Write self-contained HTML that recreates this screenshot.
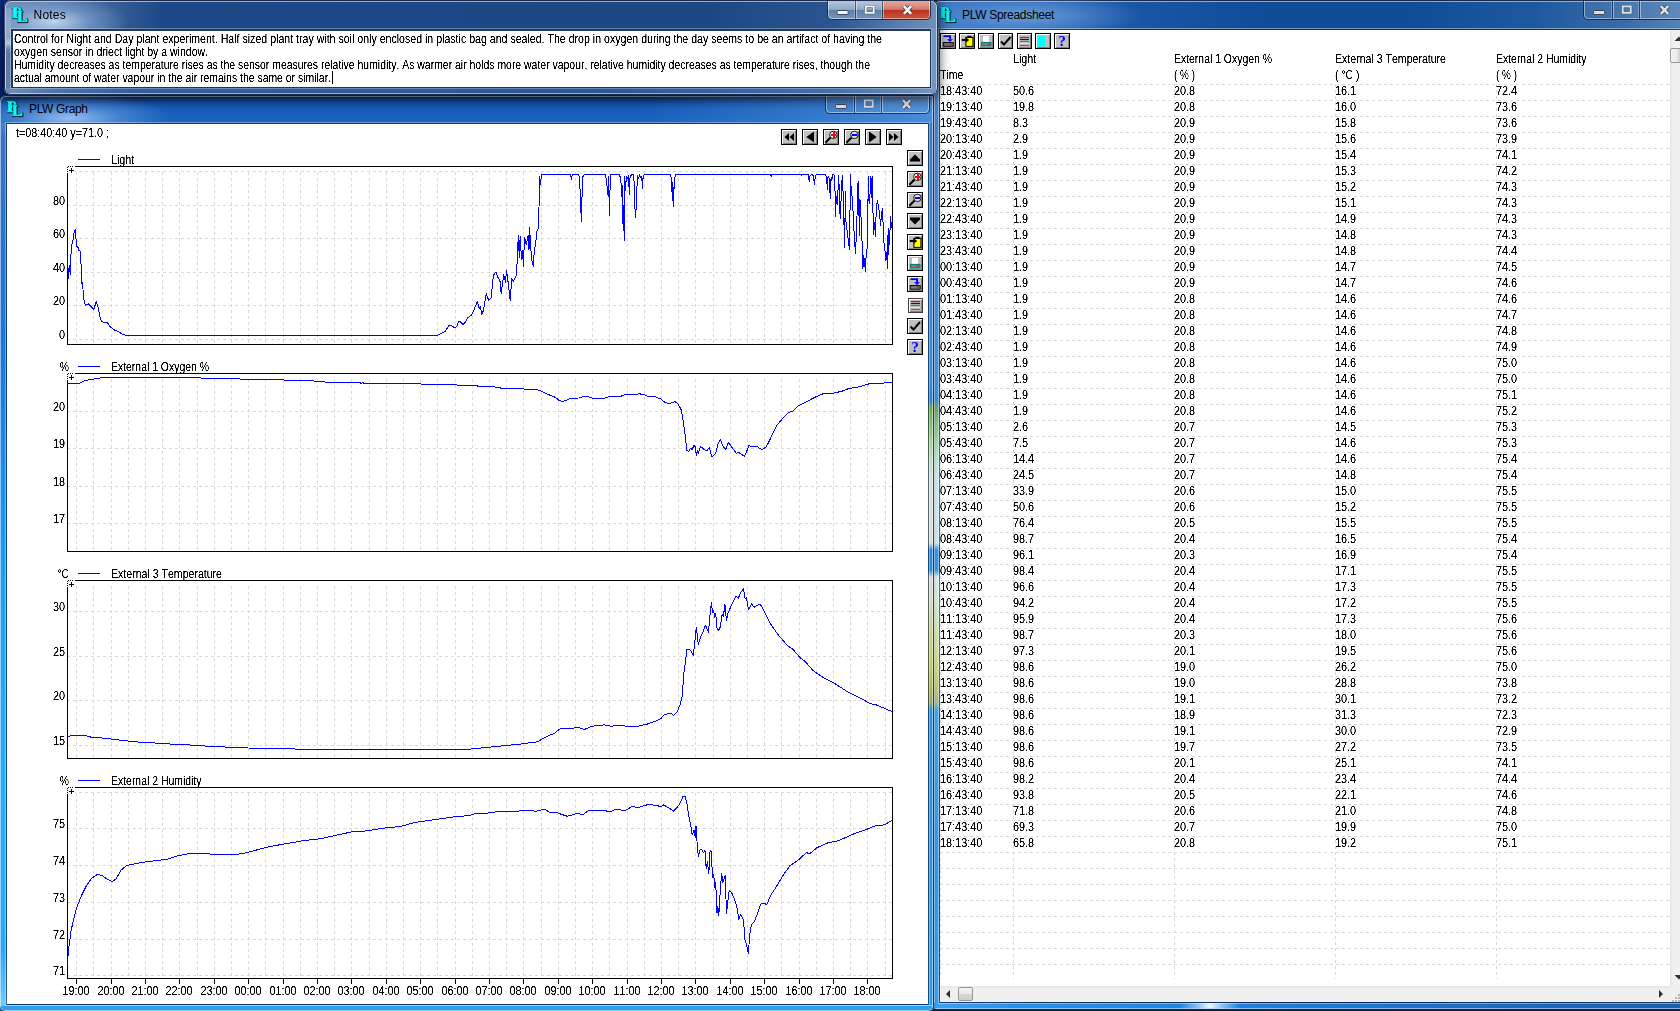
<!DOCTYPE html>
<html><head><meta charset="utf-8"><title>PicoLog</title>
<style>
html,body{margin:0;padding:0}
body{width:1680px;height:1011px;overflow:hidden;position:relative;background:#0a1a3c;font-family:"Liberation Sans",sans-serif;font-size:11px;color:#000}
.abs{position:absolute}
.t{position:absolute;white-space:pre;line-height:14px;height:14px;font-size:12px;transform-origin:0 0;font-kerning:none;font-variant-ligatures:none}
.ttl{position:absolute;white-space:pre;font-size:12px;line-height:14px;color:#000}
.win{position:absolute;box-sizing:border-box;overflow:hidden}
.btn{position:absolute;width:16px;height:16px;box-sizing:border-box;border:1px solid #000;background:#c0c0c0;box-shadow:inset 1px 1px 0 #fff,inset -1px -1px 0 #808080}
.btn svg{position:absolute;left:0;top:0}
svg{display:block}
.tx{position:absolute;left:0;top:0;width:100%;height:100%;filter:url(#crisp)}
</style></head><body>
<svg width="0" height="0" style="position:absolute"><filter id="crisp" x="0" y="0" width="100%" height="100%" color-interpolation-filters="sRGB"><feComponentTransfer><feFuncA type="linear" slope="3" intercept="-0.8"/></feComponentTransfer></filter></svg>

<div class="abs" style="left:0;top:0;width:12px;height:100px;background:linear-gradient(#0b2f8f,#0a2277)"></div>
<div class="win" id="sheet" style="left:933px;top:0;width:767px;height:1010px;border-radius:7px 7px 0 6px;background:linear-gradient(to right,#3a78c4 0px,#2a66b4 120px,#1a56a6 200px,#114c99 330px,#114c99 480px,#1d589f 600px,#3a6ba7 690px,#5282b6 747px);box-shadow:inset 0 0 0 1px rgba(8,20,50,.85),inset 0 0 0 2px rgba(255,255,255,.5)">
<div class="abs" style="left:1px;top:30px;width:7px;height:975px;background:linear-gradient(#4a86c8 94px,#4a94e0 350px,#3a90e0 370px,#70a878 378px,#8cc498 395px,#a0d8b0 410px,#c0e8d8 430px,#d0ecf8 450px,#d0ecf8 513px,#3a98e8 520px,#3a98e8 540px,#d8f0f8 547px,#d8f0e0 570px,#d0ecc8 590px,#d0e098 630px,#c0c880 660px,#a0c0a0 673px,#48a8f0 680px,#3a9ae8 830px,#3aa2f4 974px);box-shadow:inset 1px 0 0 rgba(255,255,255,.45)"></div>
<div class="abs" style="left:1px;top:1003px;width:800px;height:6px;background:linear-gradient(to right,#3aa2f4 0,#2492ee 80px,#1f84e4 250px,#1c78d6 400px,#1a68c0 600px,#1a5fb0 747px)"></div>
<div class="abs" style="left:247px;top:1003px;width:60px;height:6px;background:linear-gradient(to right,rgba(225,248,255,0),rgba(225,248,255,.55) 30%,rgba(235,252,255,.98) 50%,rgba(225,248,255,.55) 70%,rgba(225,248,255,0))"></div>
<div class="abs" style="left:1px;top:1008px;width:800px;height:1px;background:rgba(190,215,245,.7)"></div>
<div class="abs" style="left:0px;top:1009px;width:800px;height:1px;background:#12284e"></div>
<div class="abs" style="left:-20px;top:-6px;width:230px;height:44px;background:radial-gradient(closest-side,rgba(150,195,245,.55),rgba(125,172,236,.3) 55%,rgba(100,150,220,0) 100%)"></div>
<svg class="abs" style="left:6.2999999999999545px;top:6.2px" width="18" height="18" viewBox="0 0 19 19"><g fill-rule="evenodd"><path d="M1 1 H7.6 Q11 1 11 4.3 Q11 7.6 7.6 7.6 H6.3 V11.4 H7.4 V12.8 H1 V11.4 H2.1 V2.4 H1 Z M6.3 2.6 H7 Q8.1 2.6 8.1 4.3 Q8.1 6.1 7 6.1 H6.3 Z" transform="translate(0.6,0.6)" fill="#001818" stroke="#001818" stroke-width="0.9"/><path d="M1 1 H7.6 Q11 1 11 4.3 Q11 7.6 7.6 7.6 H6.3 V11.4 H7.4 V12.8 H1 V11.4 H2.1 V2.4 H1 Z M6.3 2.6 H7 Q8.1 2.6 8.1 4.3 Q8.1 6.1 7 6.1 H6.3 Z" fill="#00ffff" stroke="#007c7c" stroke-width="0.35"/><path d="M6.4 5.2 H12.2 V6.5 H11.2 V15.3 H14.2 Q15.8 15.2 16.2 12.8 H17.3 V17 H6.4 V15.7 H7.5 V6.5 H6.4 Z" transform="translate(0.6,0.6)" fill="#001818" stroke="#001818" stroke-width="0.9"/><path d="M6.4 5.2 H12.2 V6.5 H11.2 V15.3 H14.2 Q15.8 15.2 16.2 12.8 H17.3 V17 H6.4 V15.7 H7.5 V6.5 H6.4 Z" fill="#00ffff" stroke="#007c7c" stroke-width="0.35"/></g></svg>
<div class="ttl" style="left:29px;top:8px;letter-spacing:-0.293px">PLW Spreadsheet</div>
<svg class="abs" style="left:650px;top:1px" width="105" height="20" viewBox="0 0 105 20"><path d="M0.5 0 V14 Q0.5 18.5 5 18.5 H100 Q104.5 18.5 104.5 14 V0 Z" fill="rgba(255,255,255,0.07)" stroke="none"/><path d="M0.5 0 V14 Q0.5 18.5 5 18.5 H100 Q104.5 18.5 104.5 14 V0" fill="none" stroke="rgba(10,25,60,0.75)" stroke-width="1"/><path d="M1.5 0 V14 Q1.5 17.5 5 17.5 H100 Q103.5 17.5 103.5 14 V0" fill="none" stroke="rgba(255,255,255,0.45)" stroke-width="1"/><path d="M29.5 0 V18" stroke="rgba(10,25,60,0.6)"/><path d="M30.5 0 V17" stroke="rgba(255,255,255,0.45)"/><path d="M28.5 0 V17" stroke="rgba(255,255,255,0.25)"/><path d="M56.5 0 V18" stroke="rgba(10,25,60,0.6)"/><path d="M57.5 0 V17" stroke="rgba(255,255,255,0.45)"/><path d="M55.5 0 V17" stroke="rgba(255,255,255,0.25)"/><rect x="10.6" y="9.5" width="11" height="4" rx="0.8" fill="#dedede" stroke="#37465f" stroke-width="1"/><rect x="39.7" y="5.4" width="8" height="6.4" fill="none" stroke="#37465f" stroke-width="3" stroke-linejoin="round"/><rect x="39.7" y="5.4" width="8" height="6.4" fill="none" stroke="#dedede" stroke-width="2"/><path d="M77.9 5.2 L85.1 12.8 M85.1 5.2 L77.9 12.8" stroke="#37465f" stroke-width="4.2" stroke-linecap="butt"/><path d="M77.9 5.2 L85.1 12.8 M85.1 5.2 L77.9 12.8" stroke="#dedede" stroke-width="2.6" stroke-linecap="butt"/></svg>
<div class="abs" style="left:6px;top:29px;width:800px;height:974px;background:rgba(10,28,50,.62);box-shadow:0 0 0 1px rgba(255,255,255,.4)"></div>
<div class="abs" id="sheetc" style="left:7px;top:30px;width:800px;height:972px;background:#fff;overflow:hidden">
<div class="btn" style="left:0px;top:3px;width:16px;height:16px"><svg width="14" height="14" viewBox="0 0 14 14"><path d="M2.6 2.1 H9.1 V5.6" fill="none" stroke="#0000ff" stroke-width="1.9"/><path d="M6 5.2 H12 L9 8 Z" fill="#0000ff"/><rect x="2.2" y="8.6" width="10" height="3.6" fill="#808080" stroke="#000" stroke-width="1"/><rect x="8.8" y="9.6" width="2" height="1.1" fill="#ff0000"/></svg></div>
<div class="btn" style="left:19px;top:3px;width:16px;height:16px"><svg width="14" height="14" viewBox="0 0 14 14"><rect x="5.9" y="3.4" width="7" height="9" fill="#ffff00" stroke="#000" stroke-width="1"/><rect x="7.3" y="1.8" width="4.2" height="1.8" fill="#000"/><path d="M1.8 4.9 H5.6 V3.3 L9.2 6 L5.6 8.7 V7.1 H1.8 Z" fill="#000"/></svg></div>
<div class="btn" style="left:38px;top:3px;width:16px;height:16px"><svg width="14" height="14" viewBox="0 0 14 14"><rect x="4" y="2" width="6" height="6" fill="#fff"/><rect x="2.5" y="8.5" width="9.5" height="3.4" fill="#808080" stroke="#008080" stroke-width="1.2"/><rect x="8.5" y="9.6" width="2.2" height="1.2" fill="#ff0000"/></svg></div>
<div class="btn" style="left:58px;top:3px;width:15px;height:16px"><svg width="13" height="14" viewBox="0 0 13 14"><path d="M2 7.5 L5 10.5 L11.5 3" fill="none" stroke="#000" stroke-width="2"/></svg></div>
<div class="btn" style="left:77px;top:3px;width:15px;height:16px"><svg width="13" height="14" viewBox="0 0 13 14"><g stroke-width="1.2"><path d="M2 3.5H11" stroke="#ff0000"/><path d="M2 5.5H11" stroke="#0000ff"/><path d="M2 7.5H11" stroke="#00c000"/><path d="M2 9.5H11" stroke="#ffff00"/><path d="M2 11.5H11" stroke="#ff00ff"/></g></svg></div>
<div class="btn" style="left:95px;top:3px;width:16px;height:16px"><svg width="14" height="14" viewBox="0 0 14 14"><rect x="1.5" y="1.5" width="7.5" height="11" fill="#00ffff"/></svg></div>
<div class="btn" style="left:114px;top:3px;width:16px;height:16px"><svg width="14" height="14" viewBox="0 0 14 14"><text x="7" y="12.3" font-family="Liberation Serif" font-weight="bold" font-size="15" fill="#0000ff" text-anchor="middle">?</text></svg></div>
<svg class="abs" style="left:0;top:0" width="730" height="956" viewBox="940 30 730 956" shape-rendering="crispEdges"><path d="M940 84.5 H1669.5" stroke="#d9d9d9" stroke-dasharray="3 3" stroke-dashoffset="0"/><path d="M940 100.5 H1669.5" stroke="#d9d9d9" stroke-dasharray="3 3" stroke-dashoffset="0"/><path d="M940 116.5 H1669.5" stroke="#d9d9d9" stroke-dasharray="3 3" stroke-dashoffset="0"/><path d="M940 132.5 H1669.5" stroke="#d9d9d9" stroke-dasharray="3 3" stroke-dashoffset="0"/><path d="M940 148.5 H1669.5" stroke="#d9d9d9" stroke-dasharray="3 3" stroke-dashoffset="0"/><path d="M940 164.5 H1669.5" stroke="#d9d9d9" stroke-dasharray="3 3" stroke-dashoffset="0"/><path d="M940 180.5 H1669.5" stroke="#d9d9d9" stroke-dasharray="3 3" stroke-dashoffset="0"/><path d="M940 196.5 H1669.5" stroke="#d9d9d9" stroke-dasharray="3 3" stroke-dashoffset="0"/><path d="M940 212.5 H1669.5" stroke="#d9d9d9" stroke-dasharray="3 3" stroke-dashoffset="0"/><path d="M940 228.5 H1669.5" stroke="#d9d9d9" stroke-dasharray="3 3" stroke-dashoffset="0"/><path d="M940 244.5 H1669.5" stroke="#d9d9d9" stroke-dasharray="3 3" stroke-dashoffset="0"/><path d="M940 260.5 H1669.5" stroke="#d9d9d9" stroke-dasharray="3 3" stroke-dashoffset="0"/><path d="M940 276.5 H1669.5" stroke="#d9d9d9" stroke-dasharray="3 3" stroke-dashoffset="0"/><path d="M940 292.5 H1669.5" stroke="#d9d9d9" stroke-dasharray="3 3" stroke-dashoffset="0"/><path d="M940 308.5 H1669.5" stroke="#d9d9d9" stroke-dasharray="3 3" stroke-dashoffset="0"/><path d="M940 324.5 H1669.5" stroke="#d9d9d9" stroke-dasharray="3 3" stroke-dashoffset="0"/><path d="M940 340.5 H1669.5" stroke="#d9d9d9" stroke-dasharray="3 3" stroke-dashoffset="0"/><path d="M940 356.5 H1669.5" stroke="#d9d9d9" stroke-dasharray="3 3" stroke-dashoffset="0"/><path d="M940 372.5 H1669.5" stroke="#d9d9d9" stroke-dasharray="3 3" stroke-dashoffset="0"/><path d="M940 388.5 H1669.5" stroke="#d9d9d9" stroke-dasharray="3 3" stroke-dashoffset="0"/><path d="M940 404.5 H1669.5" stroke="#d9d9d9" stroke-dasharray="3 3" stroke-dashoffset="0"/><path d="M940 420.5 H1669.5" stroke="#d9d9d9" stroke-dasharray="3 3" stroke-dashoffset="0"/><path d="M940 436.5 H1669.5" stroke="#d9d9d9" stroke-dasharray="3 3" stroke-dashoffset="0"/><path d="M940 452.5 H1669.5" stroke="#d9d9d9" stroke-dasharray="3 3" stroke-dashoffset="0"/><path d="M940 468.5 H1669.5" stroke="#d9d9d9" stroke-dasharray="3 3" stroke-dashoffset="0"/><path d="M940 484.5 H1669.5" stroke="#d9d9d9" stroke-dasharray="3 3" stroke-dashoffset="0"/><path d="M940 500.5 H1669.5" stroke="#d9d9d9" stroke-dasharray="3 3" stroke-dashoffset="0"/><path d="M940 516.5 H1669.5" stroke="#d9d9d9" stroke-dasharray="3 3" stroke-dashoffset="0"/><path d="M940 532.5 H1669.5" stroke="#d9d9d9" stroke-dasharray="3 3" stroke-dashoffset="0"/><path d="M940 548.5 H1669.5" stroke="#d9d9d9" stroke-dasharray="3 3" stroke-dashoffset="0"/><path d="M940 564.5 H1669.5" stroke="#d9d9d9" stroke-dasharray="3 3" stroke-dashoffset="0"/><path d="M940 580.5 H1669.5" stroke="#d9d9d9" stroke-dasharray="3 3" stroke-dashoffset="0"/><path d="M940 596.5 H1669.5" stroke="#d9d9d9" stroke-dasharray="3 3" stroke-dashoffset="0"/><path d="M940 612.5 H1669.5" stroke="#d9d9d9" stroke-dasharray="3 3" stroke-dashoffset="0"/><path d="M940 628.5 H1669.5" stroke="#d9d9d9" stroke-dasharray="3 3" stroke-dashoffset="0"/><path d="M940 644.5 H1669.5" stroke="#d9d9d9" stroke-dasharray="3 3" stroke-dashoffset="0"/><path d="M940 660.5 H1669.5" stroke="#d9d9d9" stroke-dasharray="3 3" stroke-dashoffset="0"/><path d="M940 676.5 H1669.5" stroke="#d9d9d9" stroke-dasharray="3 3" stroke-dashoffset="0"/><path d="M940 692.5 H1669.5" stroke="#d9d9d9" stroke-dasharray="3 3" stroke-dashoffset="0"/><path d="M940 708.5 H1669.5" stroke="#d9d9d9" stroke-dasharray="3 3" stroke-dashoffset="0"/><path d="M940 724.5 H1669.5" stroke="#d9d9d9" stroke-dasharray="3 3" stroke-dashoffset="0"/><path d="M940 740.5 H1669.5" stroke="#d9d9d9" stroke-dasharray="3 3" stroke-dashoffset="0"/><path d="M940 756.5 H1669.5" stroke="#d9d9d9" stroke-dasharray="3 3" stroke-dashoffset="0"/><path d="M940 772.5 H1669.5" stroke="#d9d9d9" stroke-dasharray="3 3" stroke-dashoffset="0"/><path d="M940 788.5 H1669.5" stroke="#d9d9d9" stroke-dasharray="3 3" stroke-dashoffset="0"/><path d="M940 804.5 H1669.5" stroke="#d9d9d9" stroke-dasharray="3 3" stroke-dashoffset="0"/><path d="M940 820.5 H1669.5" stroke="#d9d9d9" stroke-dasharray="3 3" stroke-dashoffset="0"/><path d="M940 836.5 H1669.5" stroke="#d9d9d9" stroke-dasharray="3 3" stroke-dashoffset="0"/><path d="M940 852.5 H1669.5" stroke="#d9d9d9" stroke-dasharray="3 3" stroke-dashoffset="0"/><path d="M940 868.5 H1669.5" stroke="#d9d9d9" stroke-dasharray="3 3" stroke-dashoffset="0"/><path d="M940 884.5 H1669.5" stroke="#d9d9d9" stroke-dasharray="3 3" stroke-dashoffset="0"/><path d="M940 900.5 H1669.5" stroke="#d9d9d9" stroke-dasharray="3 3" stroke-dashoffset="0"/><path d="M940 916.5 H1669.5" stroke="#d9d9d9" stroke-dasharray="3 3" stroke-dashoffset="0"/><path d="M940 932.5 H1669.5" stroke="#d9d9d9" stroke-dasharray="3 3" stroke-dashoffset="0"/><path d="M940 948.5 H1669.5" stroke="#d9d9d9" stroke-dasharray="3 3" stroke-dashoffset="0"/><path d="M940 964.5 H1669.5" stroke="#d9d9d9" stroke-dasharray="3 3" stroke-dashoffset="0"/><path d="M940.5 84 V979" stroke="#d9d9d9" stroke-dasharray="3 3"/><path d="M1013.5 84 V979" stroke="#d9d9d9" stroke-dasharray="3 3"/><path d="M1174.5 84 V979" stroke="#d9d9d9" stroke-dasharray="3 3"/><path d="M1335.5 84 V979" stroke="#d9d9d9" stroke-dasharray="3 3"/><path d="M1496.5 84 V979" stroke="#d9d9d9" stroke-dasharray="3 3"/></svg>
<div class="tx">
<div class="t" style="left:72.78px;top:22px;transform:scaleX(0.8951)">Light</div>
<div class="t" style="left:233.80px;top:22px;transform:scaleX(0.8693)">External 1 Oxygen %</div>
<div class="t" style="left:394.80px;top:22px;transform:scaleX(0.8805)">External 3 Temperature</div>
<div class="t" style="left:555.80px;top:22px;transform:scaleX(0.8698)">External 2 Humidity</div>
<div class="t" style="left:-0.20px;top:38px;transform:scaleX(0.8773)">Time</div>
<div class="t" style="left:234.34px;top:38px;transform:scaleX(0.8286)">( % )</div>
<div class="t" style="left:395.30px;top:38px;transform:scaleX(0.8711)">( °C )</div>
<div class="t" style="left:556.34px;top:38px;transform:scaleX(0.8286)">( % )</div>
<div class="t" style="left:0.28px;top:54px;transform:scaleX(0.905)">18:43:40</div>
<div class="t" style="left:72.78px;top:54px;transform:scaleX(0.905)">50.6</div>
<div class="t" style="left:233.78px;top:54px;transform:scaleX(0.905)">20.8</div>
<div class="t" style="left:394.78px;top:54px;transform:scaleX(0.905)">16.1</div>
<div class="t" style="left:555.78px;top:54px;transform:scaleX(0.905)">72.4</div>
<div class="t" style="left:0.28px;top:70px;transform:scaleX(0.905)">19:13:40</div>
<div class="t" style="left:72.78px;top:70px;transform:scaleX(0.905)">19.8</div>
<div class="t" style="left:233.78px;top:70px;transform:scaleX(0.905)">20.8</div>
<div class="t" style="left:394.78px;top:70px;transform:scaleX(0.905)">16.0</div>
<div class="t" style="left:555.78px;top:70px;transform:scaleX(0.905)">73.6</div>
<div class="t" style="left:0.28px;top:86px;transform:scaleX(0.905)">19:43:40</div>
<div class="t" style="left:72.78px;top:86px;transform:scaleX(0.905)">8.3</div>
<div class="t" style="left:233.78px;top:86px;transform:scaleX(0.905)">20.9</div>
<div class="t" style="left:394.78px;top:86px;transform:scaleX(0.905)">15.8</div>
<div class="t" style="left:555.78px;top:86px;transform:scaleX(0.905)">73.6</div>
<div class="t" style="left:0.28px;top:102px;transform:scaleX(0.905)">20:13:40</div>
<div class="t" style="left:72.78px;top:102px;transform:scaleX(0.905)">2.9</div>
<div class="t" style="left:233.78px;top:102px;transform:scaleX(0.905)">20.9</div>
<div class="t" style="left:394.78px;top:102px;transform:scaleX(0.905)">15.6</div>
<div class="t" style="left:555.78px;top:102px;transform:scaleX(0.905)">73.9</div>
<div class="t" style="left:0.28px;top:118px;transform:scaleX(0.905)">20:43:40</div>
<div class="t" style="left:72.78px;top:118px;transform:scaleX(0.905)">1.9</div>
<div class="t" style="left:233.78px;top:118px;transform:scaleX(0.905)">20.9</div>
<div class="t" style="left:394.78px;top:118px;transform:scaleX(0.905)">15.4</div>
<div class="t" style="left:555.78px;top:118px;transform:scaleX(0.905)">74.1</div>
<div class="t" style="left:0.28px;top:134px;transform:scaleX(0.905)">21:13:40</div>
<div class="t" style="left:72.78px;top:134px;transform:scaleX(0.905)">1.9</div>
<div class="t" style="left:233.78px;top:134px;transform:scaleX(0.905)">20.9</div>
<div class="t" style="left:394.78px;top:134px;transform:scaleX(0.905)">15.3</div>
<div class="t" style="left:555.78px;top:134px;transform:scaleX(0.905)">74.2</div>
<div class="t" style="left:0.28px;top:150px;transform:scaleX(0.905)">21:43:40</div>
<div class="t" style="left:72.78px;top:150px;transform:scaleX(0.905)">1.9</div>
<div class="t" style="left:233.78px;top:150px;transform:scaleX(0.905)">20.9</div>
<div class="t" style="left:394.78px;top:150px;transform:scaleX(0.905)">15.2</div>
<div class="t" style="left:555.78px;top:150px;transform:scaleX(0.905)">74.3</div>
<div class="t" style="left:0.28px;top:166px;transform:scaleX(0.905)">22:13:40</div>
<div class="t" style="left:72.78px;top:166px;transform:scaleX(0.905)">1.9</div>
<div class="t" style="left:233.78px;top:166px;transform:scaleX(0.905)">20.9</div>
<div class="t" style="left:394.78px;top:166px;transform:scaleX(0.905)">15.1</div>
<div class="t" style="left:555.78px;top:166px;transform:scaleX(0.905)">74.3</div>
<div class="t" style="left:0.28px;top:182px;transform:scaleX(0.905)">22:43:40</div>
<div class="t" style="left:72.78px;top:182px;transform:scaleX(0.905)">1.9</div>
<div class="t" style="left:233.78px;top:182px;transform:scaleX(0.905)">20.9</div>
<div class="t" style="left:394.78px;top:182px;transform:scaleX(0.905)">14.9</div>
<div class="t" style="left:555.78px;top:182px;transform:scaleX(0.905)">74.3</div>
<div class="t" style="left:0.28px;top:198px;transform:scaleX(0.905)">23:13:40</div>
<div class="t" style="left:72.78px;top:198px;transform:scaleX(0.905)">1.9</div>
<div class="t" style="left:233.78px;top:198px;transform:scaleX(0.905)">20.9</div>
<div class="t" style="left:394.78px;top:198px;transform:scaleX(0.905)">14.8</div>
<div class="t" style="left:555.78px;top:198px;transform:scaleX(0.905)">74.3</div>
<div class="t" style="left:0.28px;top:214px;transform:scaleX(0.905)">23:43:40</div>
<div class="t" style="left:72.78px;top:214px;transform:scaleX(0.905)">1.9</div>
<div class="t" style="left:233.78px;top:214px;transform:scaleX(0.905)">20.9</div>
<div class="t" style="left:394.78px;top:214px;transform:scaleX(0.905)">14.8</div>
<div class="t" style="left:555.78px;top:214px;transform:scaleX(0.905)">74.4</div>
<div class="t" style="left:0.28px;top:230px;transform:scaleX(0.905)">00:13:40</div>
<div class="t" style="left:72.78px;top:230px;transform:scaleX(0.905)">1.9</div>
<div class="t" style="left:233.78px;top:230px;transform:scaleX(0.905)">20.9</div>
<div class="t" style="left:394.78px;top:230px;transform:scaleX(0.905)">14.7</div>
<div class="t" style="left:555.78px;top:230px;transform:scaleX(0.905)">74.5</div>
<div class="t" style="left:0.28px;top:246px;transform:scaleX(0.905)">00:43:40</div>
<div class="t" style="left:72.78px;top:246px;transform:scaleX(0.905)">1.9</div>
<div class="t" style="left:233.78px;top:246px;transform:scaleX(0.905)">20.9</div>
<div class="t" style="left:394.78px;top:246px;transform:scaleX(0.905)">14.7</div>
<div class="t" style="left:555.78px;top:246px;transform:scaleX(0.905)">74.6</div>
<div class="t" style="left:0.28px;top:262px;transform:scaleX(0.905)">01:13:40</div>
<div class="t" style="left:72.78px;top:262px;transform:scaleX(0.905)">1.9</div>
<div class="t" style="left:233.78px;top:262px;transform:scaleX(0.905)">20.8</div>
<div class="t" style="left:394.78px;top:262px;transform:scaleX(0.905)">14.6</div>
<div class="t" style="left:555.78px;top:262px;transform:scaleX(0.905)">74.6</div>
<div class="t" style="left:0.28px;top:278px;transform:scaleX(0.905)">01:43:40</div>
<div class="t" style="left:72.78px;top:278px;transform:scaleX(0.905)">1.9</div>
<div class="t" style="left:233.78px;top:278px;transform:scaleX(0.905)">20.8</div>
<div class="t" style="left:394.78px;top:278px;transform:scaleX(0.905)">14.6</div>
<div class="t" style="left:555.78px;top:278px;transform:scaleX(0.905)">74.7</div>
<div class="t" style="left:0.28px;top:294px;transform:scaleX(0.905)">02:13:40</div>
<div class="t" style="left:72.78px;top:294px;transform:scaleX(0.905)">1.9</div>
<div class="t" style="left:233.78px;top:294px;transform:scaleX(0.905)">20.8</div>
<div class="t" style="left:394.78px;top:294px;transform:scaleX(0.905)">14.6</div>
<div class="t" style="left:555.78px;top:294px;transform:scaleX(0.905)">74.8</div>
<div class="t" style="left:0.28px;top:310px;transform:scaleX(0.905)">02:43:40</div>
<div class="t" style="left:72.78px;top:310px;transform:scaleX(0.905)">1.9</div>
<div class="t" style="left:233.78px;top:310px;transform:scaleX(0.905)">20.8</div>
<div class="t" style="left:394.78px;top:310px;transform:scaleX(0.905)">14.6</div>
<div class="t" style="left:555.78px;top:310px;transform:scaleX(0.905)">74.9</div>
<div class="t" style="left:0.28px;top:326px;transform:scaleX(0.905)">03:13:40</div>
<div class="t" style="left:72.78px;top:326px;transform:scaleX(0.905)">1.9</div>
<div class="t" style="left:233.78px;top:326px;transform:scaleX(0.905)">20.8</div>
<div class="t" style="left:394.78px;top:326px;transform:scaleX(0.905)">14.6</div>
<div class="t" style="left:555.78px;top:326px;transform:scaleX(0.905)">75.0</div>
<div class="t" style="left:0.28px;top:342px;transform:scaleX(0.905)">03:43:40</div>
<div class="t" style="left:72.78px;top:342px;transform:scaleX(0.905)">1.9</div>
<div class="t" style="left:233.78px;top:342px;transform:scaleX(0.905)">20.8</div>
<div class="t" style="left:394.78px;top:342px;transform:scaleX(0.905)">14.6</div>
<div class="t" style="left:555.78px;top:342px;transform:scaleX(0.905)">75.0</div>
<div class="t" style="left:0.28px;top:358px;transform:scaleX(0.905)">04:13:40</div>
<div class="t" style="left:72.78px;top:358px;transform:scaleX(0.905)">1.9</div>
<div class="t" style="left:233.78px;top:358px;transform:scaleX(0.905)">20.8</div>
<div class="t" style="left:394.78px;top:358px;transform:scaleX(0.905)">14.6</div>
<div class="t" style="left:555.78px;top:358px;transform:scaleX(0.905)">75.1</div>
<div class="t" style="left:0.28px;top:374px;transform:scaleX(0.905)">04:43:40</div>
<div class="t" style="left:72.78px;top:374px;transform:scaleX(0.905)">1.9</div>
<div class="t" style="left:233.78px;top:374px;transform:scaleX(0.905)">20.8</div>
<div class="t" style="left:394.78px;top:374px;transform:scaleX(0.905)">14.6</div>
<div class="t" style="left:555.78px;top:374px;transform:scaleX(0.905)">75.2</div>
<div class="t" style="left:0.28px;top:390px;transform:scaleX(0.905)">05:13:40</div>
<div class="t" style="left:72.78px;top:390px;transform:scaleX(0.905)">2.6</div>
<div class="t" style="left:233.78px;top:390px;transform:scaleX(0.905)">20.7</div>
<div class="t" style="left:394.78px;top:390px;transform:scaleX(0.905)">14.5</div>
<div class="t" style="left:555.78px;top:390px;transform:scaleX(0.905)">75.3</div>
<div class="t" style="left:0.28px;top:406px;transform:scaleX(0.905)">05:43:40</div>
<div class="t" style="left:72.78px;top:406px;transform:scaleX(0.905)">7.5</div>
<div class="t" style="left:233.78px;top:406px;transform:scaleX(0.905)">20.7</div>
<div class="t" style="left:394.78px;top:406px;transform:scaleX(0.905)">14.6</div>
<div class="t" style="left:555.78px;top:406px;transform:scaleX(0.905)">75.3</div>
<div class="t" style="left:0.28px;top:422px;transform:scaleX(0.905)">06:13:40</div>
<div class="t" style="left:72.78px;top:422px;transform:scaleX(0.905)">14.4</div>
<div class="t" style="left:233.78px;top:422px;transform:scaleX(0.905)">20.7</div>
<div class="t" style="left:394.78px;top:422px;transform:scaleX(0.905)">14.6</div>
<div class="t" style="left:555.78px;top:422px;transform:scaleX(0.905)">75.4</div>
<div class="t" style="left:0.28px;top:438px;transform:scaleX(0.905)">06:43:40</div>
<div class="t" style="left:72.78px;top:438px;transform:scaleX(0.905)">24.5</div>
<div class="t" style="left:233.78px;top:438px;transform:scaleX(0.905)">20.7</div>
<div class="t" style="left:394.78px;top:438px;transform:scaleX(0.905)">14.8</div>
<div class="t" style="left:555.78px;top:438px;transform:scaleX(0.905)">75.4</div>
<div class="t" style="left:0.28px;top:454px;transform:scaleX(0.905)">07:13:40</div>
<div class="t" style="left:72.78px;top:454px;transform:scaleX(0.905)">33.9</div>
<div class="t" style="left:233.78px;top:454px;transform:scaleX(0.905)">20.6</div>
<div class="t" style="left:394.78px;top:454px;transform:scaleX(0.905)">15.0</div>
<div class="t" style="left:555.78px;top:454px;transform:scaleX(0.905)">75.5</div>
<div class="t" style="left:0.28px;top:470px;transform:scaleX(0.905)">07:43:40</div>
<div class="t" style="left:72.78px;top:470px;transform:scaleX(0.905)">50.6</div>
<div class="t" style="left:233.78px;top:470px;transform:scaleX(0.905)">20.6</div>
<div class="t" style="left:394.78px;top:470px;transform:scaleX(0.905)">15.2</div>
<div class="t" style="left:555.78px;top:470px;transform:scaleX(0.905)">75.5</div>
<div class="t" style="left:0.28px;top:486px;transform:scaleX(0.905)">08:13:40</div>
<div class="t" style="left:72.78px;top:486px;transform:scaleX(0.905)">76.4</div>
<div class="t" style="left:233.78px;top:486px;transform:scaleX(0.905)">20.5</div>
<div class="t" style="left:394.78px;top:486px;transform:scaleX(0.905)">15.5</div>
<div class="t" style="left:555.78px;top:486px;transform:scaleX(0.905)">75.5</div>
<div class="t" style="left:0.28px;top:502px;transform:scaleX(0.905)">08:43:40</div>
<div class="t" style="left:72.78px;top:502px;transform:scaleX(0.905)">98.7</div>
<div class="t" style="left:233.78px;top:502px;transform:scaleX(0.905)">20.4</div>
<div class="t" style="left:394.78px;top:502px;transform:scaleX(0.905)">16.5</div>
<div class="t" style="left:555.78px;top:502px;transform:scaleX(0.905)">75.4</div>
<div class="t" style="left:0.28px;top:518px;transform:scaleX(0.905)">09:13:40</div>
<div class="t" style="left:72.78px;top:518px;transform:scaleX(0.905)">96.1</div>
<div class="t" style="left:233.78px;top:518px;transform:scaleX(0.905)">20.3</div>
<div class="t" style="left:394.78px;top:518px;transform:scaleX(0.905)">16.9</div>
<div class="t" style="left:555.78px;top:518px;transform:scaleX(0.905)">75.4</div>
<div class="t" style="left:0.28px;top:534px;transform:scaleX(0.905)">09:43:40</div>
<div class="t" style="left:72.78px;top:534px;transform:scaleX(0.905)">98.4</div>
<div class="t" style="left:233.78px;top:534px;transform:scaleX(0.905)">20.4</div>
<div class="t" style="left:394.78px;top:534px;transform:scaleX(0.905)">17.1</div>
<div class="t" style="left:555.78px;top:534px;transform:scaleX(0.905)">75.5</div>
<div class="t" style="left:0.28px;top:550px;transform:scaleX(0.905)">10:13:40</div>
<div class="t" style="left:72.78px;top:550px;transform:scaleX(0.905)">96.6</div>
<div class="t" style="left:233.78px;top:550px;transform:scaleX(0.905)">20.4</div>
<div class="t" style="left:394.78px;top:550px;transform:scaleX(0.905)">17.3</div>
<div class="t" style="left:555.78px;top:550px;transform:scaleX(0.905)">75.5</div>
<div class="t" style="left:0.28px;top:566px;transform:scaleX(0.905)">10:43:40</div>
<div class="t" style="left:72.78px;top:566px;transform:scaleX(0.905)">94.2</div>
<div class="t" style="left:233.78px;top:566px;transform:scaleX(0.905)">20.4</div>
<div class="t" style="left:394.78px;top:566px;transform:scaleX(0.905)">17.2</div>
<div class="t" style="left:555.78px;top:566px;transform:scaleX(0.905)">75.5</div>
<div class="t" style="left:0.28px;top:582px;transform:scaleX(0.905)">11:13:40</div>
<div class="t" style="left:72.78px;top:582px;transform:scaleX(0.905)">95.9</div>
<div class="t" style="left:233.78px;top:582px;transform:scaleX(0.905)">20.4</div>
<div class="t" style="left:394.78px;top:582px;transform:scaleX(0.905)">17.3</div>
<div class="t" style="left:555.78px;top:582px;transform:scaleX(0.905)">75.6</div>
<div class="t" style="left:0.28px;top:598px;transform:scaleX(0.905)">11:43:40</div>
<div class="t" style="left:72.78px;top:598px;transform:scaleX(0.905)">98.7</div>
<div class="t" style="left:233.78px;top:598px;transform:scaleX(0.905)">20.3</div>
<div class="t" style="left:394.78px;top:598px;transform:scaleX(0.905)">18.0</div>
<div class="t" style="left:555.78px;top:598px;transform:scaleX(0.905)">75.6</div>
<div class="t" style="left:0.28px;top:614px;transform:scaleX(0.905)">12:13:40</div>
<div class="t" style="left:72.78px;top:614px;transform:scaleX(0.905)">97.3</div>
<div class="t" style="left:233.78px;top:614px;transform:scaleX(0.905)">20.1</div>
<div class="t" style="left:394.78px;top:614px;transform:scaleX(0.905)">19.5</div>
<div class="t" style="left:555.78px;top:614px;transform:scaleX(0.905)">75.6</div>
<div class="t" style="left:0.28px;top:630px;transform:scaleX(0.905)">12:43:40</div>
<div class="t" style="left:72.78px;top:630px;transform:scaleX(0.905)">98.6</div>
<div class="t" style="left:233.78px;top:630px;transform:scaleX(0.905)">19.0</div>
<div class="t" style="left:394.78px;top:630px;transform:scaleX(0.905)">26.2</div>
<div class="t" style="left:555.78px;top:630px;transform:scaleX(0.905)">75.0</div>
<div class="t" style="left:0.28px;top:646px;transform:scaleX(0.905)">13:13:40</div>
<div class="t" style="left:72.78px;top:646px;transform:scaleX(0.905)">98.6</div>
<div class="t" style="left:233.78px;top:646px;transform:scaleX(0.905)">19.0</div>
<div class="t" style="left:394.78px;top:646px;transform:scaleX(0.905)">28.8</div>
<div class="t" style="left:555.78px;top:646px;transform:scaleX(0.905)">73.8</div>
<div class="t" style="left:0.28px;top:662px;transform:scaleX(0.905)">13:43:40</div>
<div class="t" style="left:72.78px;top:662px;transform:scaleX(0.905)">98.6</div>
<div class="t" style="left:233.78px;top:662px;transform:scaleX(0.905)">19.1</div>
<div class="t" style="left:394.78px;top:662px;transform:scaleX(0.905)">30.1</div>
<div class="t" style="left:555.78px;top:662px;transform:scaleX(0.905)">73.2</div>
<div class="t" style="left:0.28px;top:678px;transform:scaleX(0.905)">14:13:40</div>
<div class="t" style="left:72.78px;top:678px;transform:scaleX(0.905)">98.6</div>
<div class="t" style="left:233.78px;top:678px;transform:scaleX(0.905)">18.9</div>
<div class="t" style="left:394.78px;top:678px;transform:scaleX(0.905)">31.3</div>
<div class="t" style="left:555.78px;top:678px;transform:scaleX(0.905)">72.3</div>
<div class="t" style="left:0.28px;top:694px;transform:scaleX(0.905)">14:43:40</div>
<div class="t" style="left:72.78px;top:694px;transform:scaleX(0.905)">98.6</div>
<div class="t" style="left:233.78px;top:694px;transform:scaleX(0.905)">19.1</div>
<div class="t" style="left:394.78px;top:694px;transform:scaleX(0.905)">30.0</div>
<div class="t" style="left:555.78px;top:694px;transform:scaleX(0.905)">72.9</div>
<div class="t" style="left:0.28px;top:710px;transform:scaleX(0.905)">15:13:40</div>
<div class="t" style="left:72.78px;top:710px;transform:scaleX(0.905)">98.6</div>
<div class="t" style="left:233.78px;top:710px;transform:scaleX(0.905)">19.7</div>
<div class="t" style="left:394.78px;top:710px;transform:scaleX(0.905)">27.2</div>
<div class="t" style="left:555.78px;top:710px;transform:scaleX(0.905)">73.5</div>
<div class="t" style="left:0.28px;top:726px;transform:scaleX(0.905)">15:43:40</div>
<div class="t" style="left:72.78px;top:726px;transform:scaleX(0.905)">98.6</div>
<div class="t" style="left:233.78px;top:726px;transform:scaleX(0.905)">20.1</div>
<div class="t" style="left:394.78px;top:726px;transform:scaleX(0.905)">25.1</div>
<div class="t" style="left:555.78px;top:726px;transform:scaleX(0.905)">74.1</div>
<div class="t" style="left:0.28px;top:742px;transform:scaleX(0.905)">16:13:40</div>
<div class="t" style="left:72.78px;top:742px;transform:scaleX(0.905)">98.2</div>
<div class="t" style="left:233.78px;top:742px;transform:scaleX(0.905)">20.4</div>
<div class="t" style="left:394.78px;top:742px;transform:scaleX(0.905)">23.4</div>
<div class="t" style="left:555.78px;top:742px;transform:scaleX(0.905)">74.4</div>
<div class="t" style="left:0.28px;top:758px;transform:scaleX(0.905)">16:43:40</div>
<div class="t" style="left:72.78px;top:758px;transform:scaleX(0.905)">93.8</div>
<div class="t" style="left:233.78px;top:758px;transform:scaleX(0.905)">20.5</div>
<div class="t" style="left:394.78px;top:758px;transform:scaleX(0.905)">22.1</div>
<div class="t" style="left:555.78px;top:758px;transform:scaleX(0.905)">74.6</div>
<div class="t" style="left:0.28px;top:774px;transform:scaleX(0.905)">17:13:40</div>
<div class="t" style="left:72.78px;top:774px;transform:scaleX(0.905)">71.8</div>
<div class="t" style="left:233.78px;top:774px;transform:scaleX(0.905)">20.6</div>
<div class="t" style="left:394.78px;top:774px;transform:scaleX(0.905)">21.0</div>
<div class="t" style="left:555.78px;top:774px;transform:scaleX(0.905)">74.8</div>
<div class="t" style="left:0.28px;top:790px;transform:scaleX(0.905)">17:43:40</div>
<div class="t" style="left:72.78px;top:790px;transform:scaleX(0.905)">69.3</div>
<div class="t" style="left:233.78px;top:790px;transform:scaleX(0.905)">20.7</div>
<div class="t" style="left:394.78px;top:790px;transform:scaleX(0.905)">19.9</div>
<div class="t" style="left:555.78px;top:790px;transform:scaleX(0.905)">75.0</div>
<div class="t" style="left:0.28px;top:806px;transform:scaleX(0.905)">18:13:40</div>
<div class="t" style="left:72.78px;top:806px;transform:scaleX(0.905)">65.8</div>
<div class="t" style="left:233.78px;top:806px;transform:scaleX(0.905)">20.8</div>
<div class="t" style="left:394.78px;top:806px;transform:scaleX(0.905)">19.2</div>
<div class="t" style="left:555.78px;top:806px;transform:scaleX(0.905)">75.1</div>
</div>
<div class="abs" style="left:730px;top:0;width:20px;height:956px;background:linear-gradient(to right,#e4e4e4,#f0f0f0 3px,#f0f0f0)"></div>
<div class="abs" style="left:0;top:956px;width:730px;height:16px;background:linear-gradient(#e4e4e4,#f0f0f0 3px,#f0f0f0)"></div>
<div class="abs" style="left:730px;top:956px;width:20px;height:16px;background:#f0f0f0"></div>
<svg class="abs" style="left:730px;top:956px" width="10" height="16" viewBox="0 0 10 16" shape-rendering="crispEdges"><g fill="#b4b4b4"><rect x="8" y="8" width="2" height="2"/><rect x="5" y="11" width="2" height="2"/><rect x="8" y="11" width="2" height="2"/><rect x="2" y="14" width="2" height="2"/><rect x="5" y="14" width="2" height="2"/><rect x="8" y="14" width="2" height="2"/></g></svg>
<div class="abs" style="left:18px;top:957px;width:15px;height:14px;box-sizing:border-box;border:1px solid #979797;border-radius:2px;background:linear-gradient(#f4f4f4,#e9e9e9 49%,#d6d6d6 50%,#cfcfcf)"></div>
<div class="abs" style="left:730px;top:18px;width:16px;height:15px;box-sizing:border-box;border:1px solid #979797;border-radius:2px;background:linear-gradient(to right,#f4f4f4,#e9e9e9 49%,#d6d6d6 50%,#cfcfcf)"></div>
<svg class="abs" style="left:0;top:956px" width="730" height="16" viewBox="940 986 730 16"><path d="M946 994 L950 990 V998 Z" fill="#303030"/><path d="M1663 994 L1659 990 V998 Z" fill="#303030"/></svg>
<svg class="abs" style="left:730px;top:0" width="10" height="956" viewBox="1670 30 10 956"><path d="M1674.5 41 L1679 36.5 L1683.5 41 Z" fill="#303030"/><path d="M1674.5 975 L1679 979.5 L1683.5 975 Z" fill="#303030"/></svg>
</div>
</div>
<div class="win" id="graph" style="left:-1px;top:95px;width:935px;height:917px;border-radius:7px 0 6px 6px;background:linear-gradient(#0c2c66 0,#0f3a80 4px,#1450a6 9px,#175cb8 14px,#1a63bf 27px,#1a63bf 28px);box-shadow:0 0 5px 0 rgba(0,0,0,.22)">
<div class="abs" style="left:1px;top:0;width:934px;height:917px">
<div class="abs" style="left:-1px;top:28px;width:8px;height:889px;background:linear-gradient(#3a72c4,#1a78d8 25%,#1f9ef0 50%,#28aef8 75%,#2ea8f6 93%,#6ccaff 99%)"></div>
<div class="abs" style="left:927px;top:28px;width:7px;height:889px;background:linear-gradient(#3d7cc4 1px,#3a88d8 257px,#2a80d0 277px,#6aaa50 285px,#88bc6c 302px,#a8cc88 317px,#c8dcc0 337px,#d8dcdc 357px,#d8dcdc 420px,#2a88d8 427px,#2a88d8 447px,#d8d8d8 454px,#d8d8c0 477px,#d0d4a0 497px,#c8cc68 537px,#b0b450 567px,#90a870 580px,#2a90e0 587px,#2a92e4 737px,#2d9cf0 881px)"></div>
<div class="abs" style="left:-1px;top:910px;width:935px;height:7px;background:linear-gradient(#9ad8ff 0,#24a0f8 1.5px,#22a0f6 3px,#3a9fe8 5px,#3a9fe8 7px)"></div>
<div class="abs" style="left:-30px;top:-2px;width:200px;height:50px;background:radial-gradient(closest-side,rgba(175,210,250,.8),rgba(130,178,238,.4) 50%,rgba(100,150,220,0) 100%)"></div>
<div class="abs" style="left:2px;top:2px;width:931px;height:26px;background:linear-gradient(to right,rgba(120,180,240,0) 0,rgba(120,180,240,0) 640px,rgba(110,175,240,.28) 800px,rgba(120,185,245,.5) 931px)"></div>
<svg class="abs" style="left:6px;top:5px" width="18" height="18" viewBox="0 0 19 19"><g fill-rule="evenodd"><path d="M1 1 H7.6 Q11 1 11 4.3 Q11 7.6 7.6 7.6 H6.3 V11.4 H7.4 V12.8 H1 V11.4 H2.1 V2.4 H1 Z M6.3 2.6 H7 Q8.1 2.6 8.1 4.3 Q8.1 6.1 7 6.1 H6.3 Z" transform="translate(0.6,0.6)" fill="#001818" stroke="#001818" stroke-width="0.9"/><path d="M1 1 H7.6 Q11 1 11 4.3 Q11 7.6 7.6 7.6 H6.3 V11.4 H7.4 V12.8 H1 V11.4 H2.1 V2.4 H1 Z M6.3 2.6 H7 Q8.1 2.6 8.1 4.3 Q8.1 6.1 7 6.1 H6.3 Z" fill="#00ffff" stroke="#007c7c" stroke-width="0.35"/><path d="M6.4 5.2 H12.2 V6.5 H11.2 V15.3 H14.2 Q15.8 15.2 16.2 12.8 H17.3 V17 H6.4 V15.7 H7.5 V6.5 H6.4 Z" transform="translate(0.6,0.6)" fill="#001818" stroke="#001818" stroke-width="0.9"/><path d="M6.4 5.2 H12.2 V6.5 H11.2 V15.3 H14.2 Q15.8 15.2 16.2 12.8 H17.3 V17 H6.4 V15.7 H7.5 V6.5 H6.4 Z" fill="#00ffff" stroke="#007c7c" stroke-width="0.35"/></g></svg>
<div class="ttl" style="left:29px;top:7px;letter-spacing:-0.356px">PLW Graph</div>
<svg class="abs" style="left:825px;top:0px" width="105" height="20" viewBox="0 0 105 20"><path d="M0.5 0 V14 Q0.5 18.5 5 18.5 H100 Q104.5 18.5 104.5 14 V0 Z" fill="rgba(255,255,255,0.07)" stroke="none"/><path d="M0.5 0 V14 Q0.5 18.5 5 18.5 H100 Q104.5 18.5 104.5 14 V0" fill="none" stroke="rgba(10,25,60,0.75)" stroke-width="1"/><path d="M1.5 0 V14 Q1.5 17.5 5 17.5 H100 Q103.5 17.5 103.5 14 V0" fill="none" stroke="rgba(255,255,255,0.45)" stroke-width="1"/><path d="M29.5 0 V18" stroke="rgba(10,25,60,0.6)"/><path d="M30.5 0 V17" stroke="rgba(255,255,255,0.45)"/><path d="M28.5 0 V17" stroke="rgba(255,255,255,0.25)"/><path d="M56.5 0 V18" stroke="rgba(10,25,60,0.6)"/><path d="M57.5 0 V17" stroke="rgba(255,255,255,0.45)"/><path d="M55.5 0 V17" stroke="rgba(255,255,255,0.25)"/><rect x="10.6" y="9.5" width="11" height="4" rx="0.8" fill="#dedede" stroke="#37465f" stroke-width="1"/><rect x="39.7" y="5.4" width="8" height="6.4" fill="none" stroke="#37465f" stroke-width="3" stroke-linejoin="round"/><rect x="39.7" y="5.4" width="8" height="6.4" fill="none" stroke="#dedede" stroke-width="2"/><path d="M77.9 5.2 L85.1 12.8 M85.1 5.2 L77.9 12.8" stroke="#37465f" stroke-width="4.2" stroke-linecap="butt"/><path d="M77.9 5.2 L85.1 12.8 M85.1 5.2 L77.9 12.8" stroke="#dedede" stroke-width="2.6" stroke-linecap="butt"/></svg>
<div class="abs" style="left:6px;top:28px;width:923px;height:882px;background:rgba(10,28,50,.62);box-shadow:0 0 0 1px rgba(255,255,255,.35)"></div>
<div class="abs" id="graphc" style="left:7px;top:29px;width:921px;height:880px;background:#fff;overflow:hidden">
<div class="btn" style="left:774px;top:5px;width:16px;height:16px"><svg width="14" height="14" viewBox="0 0 14 14"><path d="M7 3 V11 L2.5 7 Z M12 3 V11 L7.5 7 Z" fill="#000"/></svg></div>
<div class="btn" style="left:795px;top:5px;width:16px;height:16px"><svg width="14" height="14" viewBox="0 0 14 14"><path d="M11 1.5 V12.5 L3.3 7 Z" fill="#000"/></svg></div>
<div class="btn" style="left:816px;top:5px;width:16px;height:16px"><svg width="14" height="14" viewBox="0 0 14 14"><path d="M1.3 12.7 L6.6 7.4" stroke="#000" stroke-width="2.1"/><circle cx="9.4" cy="4.9" r="3.7" fill="#fff" stroke="#000" stroke-width="0.9"/><g shape-rendering="crispEdges"><rect x="7" y="4" width="5" height="2" fill="#ff0000"/><rect x="8.5" y="2" width="2" height="6" fill="#ff0000"/></g></svg></div>
<div class="btn" style="left:837px;top:5px;width:16px;height:16px"><svg width="14" height="14" viewBox="0 0 14 14"><path d="M1.3 12.7 L6.6 7.4" stroke="#000" stroke-width="2.1"/><circle cx="9.4" cy="4.9" r="3.7" fill="#e4e4e4" stroke="#000" stroke-width="0.9"/><rect x="6.6" y="4" width="5.6" height="2" fill="#0000ff" shape-rendering="crispEdges"/></svg></div>
<div class="btn" style="left:858px;top:5px;width:16px;height:16px"><svg width="14" height="14" viewBox="0 0 14 14"><path d="M3 1.5 V12.5 L10.7 7 Z" fill="#000"/></svg></div>
<div class="btn" style="left:879px;top:5px;width:16px;height:16px"><svg width="14" height="14" viewBox="0 0 14 14"><path d="M2 3 V11 L6.5 7 Z M7 3 V11 L11.5 7 Z" fill="#000"/></svg></div>
<div class="btn" style="left:900px;top:26px;width:16px;height:16px"><svg width="14" height="14" viewBox="0 0 14 14"><path d="M2 10.5 V8.5 L7 3.5 L12 8.5 V10.5 Z" fill="#000"/></svg></div>
<div class="btn" style="left:900px;top:47px;width:16px;height:16px"><svg width="14" height="14" viewBox="0 0 14 14"><path d="M1.3 12.7 L6.6 7.4" stroke="#000" stroke-width="2.1"/><circle cx="9.4" cy="4.9" r="3.7" fill="#fff" stroke="#000" stroke-width="0.9"/><g shape-rendering="crispEdges"><rect x="7" y="4" width="5" height="2" fill="#ff0000"/><rect x="8.5" y="2" width="2" height="6" fill="#ff0000"/></g></svg></div>
<div class="btn" style="left:900px;top:68px;width:16px;height:16px"><svg width="14" height="14" viewBox="0 0 14 14"><path d="M1.3 12.7 L6.6 7.4" stroke="#000" stroke-width="2.1"/><circle cx="9.4" cy="4.9" r="3.7" fill="#e4e4e4" stroke="#000" stroke-width="0.9"/><rect x="6.6" y="4" width="5.6" height="2" fill="#0000ff" shape-rendering="crispEdges"/></svg></div>
<div class="btn" style="left:900px;top:89px;width:16px;height:16px"><svg width="14" height="14" viewBox="0 0 14 14"><path d="M2 3.5 V5.5 L7 10.5 L12 5.5 V3.5 Z" fill="#000"/></svg></div>
<div class="btn" style="left:900px;top:110px;width:16px;height:16px"><svg width="14" height="14" viewBox="0 0 14 14"><rect x="5.9" y="3.4" width="7" height="9" fill="#ffff00" stroke="#000" stroke-width="1"/><rect x="7.3" y="1.8" width="4.2" height="1.8" fill="#000"/><path d="M1.8 4.9 H5.6 V3.3 L9.2 6 L5.6 8.7 V7.1 H1.8 Z" fill="#000"/></svg></div>
<div class="btn" style="left:900px;top:131px;width:16px;height:16px"><svg width="14" height="14" viewBox="0 0 14 14"><rect x="4" y="2" width="6" height="6" fill="#fff"/><rect x="2.5" y="8.5" width="9.5" height="3.4" fill="#808080" stroke="#008080" stroke-width="1.2"/><rect x="8.5" y="9.6" width="2.2" height="1.2" fill="#ff0000"/></svg></div>
<div class="btn" style="left:900px;top:152px;width:16px;height:16px"><svg width="14" height="14" viewBox="0 0 14 14"><path d="M2.6 2.1 H9.1 V5.6" fill="none" stroke="#0000ff" stroke-width="1.9"/><path d="M6 5.2 H12 L9 8 Z" fill="#0000ff"/><rect x="2.2" y="8.6" width="10" height="3.6" fill="#808080" stroke="#000" stroke-width="1"/><rect x="8.8" y="9.6" width="2" height="1.1" fill="#ff0000"/></svg></div>
<div class="btn" style="left:901px;top:174px;width:15px;height:15px;border-color:#404040"><svg width="13" height="13" viewBox="0 0 13 13"><g stroke-width="1.2"><path d="M2 2.5H11" stroke="#ff0000"/><path d="M2 4.5H11" stroke="#0000ff"/><path d="M2 6.5H11" stroke="#00c000"/><path d="M2 8.5H11" stroke="#ffff00"/><path d="M2 10.5H11" stroke="#ff00ff"/></g></svg></div>
<div class="btn" style="left:900px;top:194px;width:16px;height:16px"><svg width="14" height="14" viewBox="0 0 14 14"><path d="M2.5 7.5 L5.5 10.5 L12 3" fill="none" stroke="#000" stroke-width="2"/></svg></div>
<div class="btn" style="left:900px;top:215px;width:16px;height:16px"><svg width="14" height="14" viewBox="0 0 14 14"><text x="7" y="12.3" font-family="Liberation Serif" font-weight="bold" font-size="15" fill="#0000ff" text-anchor="middle">?</text></svg></div>
<svg class="abs" style="left:0;top:0" width="922" height="880" viewBox="7 124 922 880"><g shape-rendering="crispEdges"><path d="M76.5 172 V344" stroke="#d9d9d9" stroke-dasharray="3 3"/><path d="M93.5 172 V344" stroke="#d9d9d9" stroke-dasharray="3 3"/><path d="M111.5 172 V344" stroke="#d9d9d9" stroke-dasharray="3 3"/><path d="M128.5 172 V344" stroke="#d9d9d9" stroke-dasharray="3 3"/><path d="M145.5 172 V344" stroke="#d9d9d9" stroke-dasharray="3 3"/><path d="M162.5 172 V344" stroke="#d9d9d9" stroke-dasharray="3 3"/><path d="M179.5 172 V344" stroke="#d9d9d9" stroke-dasharray="3 3"/><path d="M197.5 172 V344" stroke="#d9d9d9" stroke-dasharray="3 3"/><path d="M214.5 172 V344" stroke="#d9d9d9" stroke-dasharray="3 3"/><path d="M231.5 172 V344" stroke="#d9d9d9" stroke-dasharray="3 3"/><path d="M248.5 172 V344" stroke="#d9d9d9" stroke-dasharray="3 3"/><path d="M265.5 172 V344" stroke="#d9d9d9" stroke-dasharray="3 3"/><path d="M283.5 172 V344" stroke="#d9d9d9" stroke-dasharray="3 3"/><path d="M300.5 172 V344" stroke="#d9d9d9" stroke-dasharray="3 3"/><path d="M317.5 172 V344" stroke="#d9d9d9" stroke-dasharray="3 3"/><path d="M334.5 172 V344" stroke="#d9d9d9" stroke-dasharray="3 3"/><path d="M351.5 172 V344" stroke="#d9d9d9" stroke-dasharray="3 3"/><path d="M369.5 172 V344" stroke="#d9d9d9" stroke-dasharray="3 3"/><path d="M386.5 172 V344" stroke="#d9d9d9" stroke-dasharray="3 3"/><path d="M403.5 172 V344" stroke="#d9d9d9" stroke-dasharray="3 3"/><path d="M420.5 172 V344" stroke="#d9d9d9" stroke-dasharray="3 3"/><path d="M437.5 172 V344" stroke="#d9d9d9" stroke-dasharray="3 3"/><path d="M455.5 172 V344" stroke="#d9d9d9" stroke-dasharray="3 3"/><path d="M472.5 172 V344" stroke="#d9d9d9" stroke-dasharray="3 3"/><path d="M489.5 172 V344" stroke="#d9d9d9" stroke-dasharray="3 3"/><path d="M506.5 172 V344" stroke="#d9d9d9" stroke-dasharray="3 3"/><path d="M523.5 172 V344" stroke="#d9d9d9" stroke-dasharray="3 3"/><path d="M541.5 172 V344" stroke="#d9d9d9" stroke-dasharray="3 3"/><path d="M558.5 172 V344" stroke="#d9d9d9" stroke-dasharray="3 3"/><path d="M575.5 172 V344" stroke="#d9d9d9" stroke-dasharray="3 3"/><path d="M592.5 172 V344" stroke="#d9d9d9" stroke-dasharray="3 3"/><path d="M609.5 172 V344" stroke="#d9d9d9" stroke-dasharray="3 3"/><path d="M627.5 172 V344" stroke="#d9d9d9" stroke-dasharray="3 3"/><path d="M644.5 172 V344" stroke="#d9d9d9" stroke-dasharray="3 3"/><path d="M661.5 172 V344" stroke="#d9d9d9" stroke-dasharray="3 3"/><path d="M678.5 172 V344" stroke="#d9d9d9" stroke-dasharray="3 3"/><path d="M695.5 172 V344" stroke="#d9d9d9" stroke-dasharray="3 3"/><path d="M713.5 172 V344" stroke="#d9d9d9" stroke-dasharray="3 3"/><path d="M730.5 172 V344" stroke="#d9d9d9" stroke-dasharray="3 3"/><path d="M747.5 172 V344" stroke="#d9d9d9" stroke-dasharray="3 3"/><path d="M764.5 172 V344" stroke="#d9d9d9" stroke-dasharray="3 3"/><path d="M781.5 172 V344" stroke="#d9d9d9" stroke-dasharray="3 3"/><path d="M799.5 172 V344" stroke="#d9d9d9" stroke-dasharray="3 3"/><path d="M816.5 172 V344" stroke="#d9d9d9" stroke-dasharray="3 3"/><path d="M833.5 172 V344" stroke="#d9d9d9" stroke-dasharray="3 3"/><path d="M850.5 172 V344" stroke="#d9d9d9" stroke-dasharray="3 3"/><path d="M867.5 172 V344" stroke="#d9d9d9" stroke-dasharray="3 3"/><path d="M885.5 172 V344" stroke="#d9d9d9" stroke-dasharray="3 3"/><path d="M68 171.5 H892" stroke="#d9d9d9" stroke-dasharray="3 3" stroke-dashoffset="1"/><path d="M68 205.5 H892" stroke="#d9d9d9" stroke-dasharray="3 3" stroke-dashoffset="1"/><path d="M68 238.5 H892" stroke="#d9d9d9" stroke-dasharray="3 3" stroke-dashoffset="1"/><path d="M68 272.5 H892" stroke="#d9d9d9" stroke-dasharray="3 3" stroke-dashoffset="1"/><path d="M68 305.5 H892" stroke="#d9d9d9" stroke-dasharray="3 3" stroke-dashoffset="1"/><path d="M68 339.5 H892" stroke="#d9d9d9" stroke-dasharray="3 3" stroke-dashoffset="1"/><path d="M67.5 166.5 H892.5 V344.5 H67.5 Z" fill="none" stroke="#000"/><rect x="67" y="166" width="8" height="8" fill="#fff"/><path d="M67.5 174 V344" stroke="#000"/><path d="M68 166.5 H74" stroke="#000" stroke-dasharray="1 1"/><path d="M67.5 167 V174" stroke="#000" stroke-dasharray="1 1"/><path d="M69 170.5 H74 M71.5 168 V173" stroke="#000"/></g><path d="M78 159.5 H100" stroke="#0000ff" stroke-width="1" shape-rendering="crispEdges"/><path d="M67.5 255.9 L68.5 278.4 L69.4 265.3 L70.3 274.7 L71.3 246.5 L73.2 239.0 L74.1 232.4 L75.4 229.6 L76.5 246.5 L78.4 247.4 L78.8 250.2 L80.3 251.2 L81.2 267.2 L81.8 284.1 L82.6 282.2 L83.5 298.2 L85.4 305.1 L88.2 303.8 L91.0 306.6 L93.8 309.5 L96.3 301.4 L98.2 307.6 L99.5 315.1 L101.4 321.1 L104.2 322.6 L107.4 322.6 L109.8 326.4 L114.5 330.1 L118.3 331.5 L122.0 333.9 L126.2 335.6 L436.0 335.6 L440.7 333.9 L445.4 331.1 L449.1 325.4 L452.0 325.8 L453.8 327.3 L456.7 326.9 L458.5 321.3 L460.4 321.7 L462.9 324.5 L465.1 322.6 L467.9 317.5 L471.7 315.1 L474.5 308.5 L477.3 301.9 L479.2 308.5 L480.5 306.6 L481.7 314.5 L483.5 310.4 L486.2 293.5 L488.6 300.1 L491.1 298.2 L493.3 275.6 L496.1 271.9 L498.0 277.5 L499.9 280.3 L501.2 293.5 L503.7 274.7 L505.5 282.2 L506.5 270.9 L508.4 284.1 L510.2 301.0 L511.7 278.4 L513.1 281.3 L515.9 276.6 L516.8 269.0 L518.3 235.2 L519.3 257.8 L520.2 236.1 L521.5 259.6 L522.5 250.2 L523.4 266.2 L524.5 237.1 L526.2 244.6 L528.1 235.2 L529.0 250.2 L529.6 227.7 L530.9 250.2 L532.2 262.5 L533.4 266.2 L534.3 250.2 L535.6 244.6 L536.9 231.4 L538.4 227.7 L539.0 207.0 L539.6 176.0 L540.3 184.4 L541.6 174.5 L570.4 174.5 L571.5 179.7 L572.3 174.5 L578.9 174.5 L579.8 184.4 L580.7 203.2 L581.3 221.7 L582.1 193.8 L582.8 176.9 L584.5 174.5 L605.7 174.5 L605.6 174.5 L607.1 186.3 L607.9 194.8 L608.6 176.9 L609.4 215.8 L610.2 182.6 L610.9 174.5 L619.7 174.5 L621.1 183.5 L621.6 196.7 L622.0 183.5 L622.6 223.9 L623.3 205.1 L624.3 240.8 L624.8 176.9 L625.6 191.0 L626.3 176.0 L627.8 178.8 L628.6 176.0 L629.3 194.8 L630.1 176.0 L632.0 174.5 L633.8 175.0 L634.6 196.7 L635.3 217.7 L636.1 208.9 L636.8 190.1 L637.6 175.0 L638.5 178.8 L639.5 175.0 L641.0 177.9 L641.7 176.0 L642.5 188.8 L643.1 176.9 L644.4 174.5 L670.5 174.5 L671.4 178.8 L672.4 200.4 L672.9 182.6 L673.5 206.6 L674.3 178.8 L675.8 174.5 L770.7 174.5 L771.3 176.5 L772.0 174.5 L800.8 174.5 L801.4 175.6 L802.1 174.5 L808.2 174.5 L809.3 181.6 L810.0 176.0 L811.9 174.5 L813.4 176.0 L814.4 184.8 L815.3 176.0 L816.6 174.5 L825.1 174.5 L826.6 176.9 L827.3 189.1 L828.1 176.0 L829.2 178.8 L830.3 198.5 L831.1 176.9 L831.8 180.7 L832.6 174.5 L834.1 175.0 L834.9 184.4 L835.4 216.4 L836.2 196.7 L837.1 205.1 L837.9 192.0 L838.8 175.0 L839.7 210.8 L840.5 218.3 L841.4 188.2 L842.4 175.0 L843.1 193.8 L843.9 220.2 L844.6 247.4 L845.4 191.0 L846.1 225.8 L847.3 231.4 L848.6 242.7 L849.5 249.3 L849.9 218.3 L850.5 175.0 L851.4 193.8 L852.3 197.6 L853.3 216.4 L854.2 235.2 L855.5 254.0 L856.3 235.2 L857.0 216.4 L857.8 184.4 L858.5 181.6 L859.3 235.2 L860.0 199.5 L861.2 220.2 L862.3 248.4 L862.9 269.0 L863.8 255.9 L864.6 262.5 L865.5 271.9 L866.1 255.9 L866.8 254.9 L867.6 231.4 L868.3 176.0 L869.1 204.2 L869.8 200.4 L870.6 176.0 L871.3 197.6 L872.1 176.0 L872.8 205.1 L873.6 234.3 L874.3 222.0 L875.5 236.1 L876.2 210.8 L877.3 200.4 L878.5 207.0 L879.6 213.6 L880.5 225.8 L881.5 214.5 L882.4 208.9 L883.4 229.6 L884.3 248.4 L885.2 252.1 L886.0 260.6 L886.7 252.1 L887.5 268.7 L888.1 228.6 L888.6 254.9 L889.4 235.2 L890.1 229.6 L890.7 216.4 L891.3 227.7 L891.8 223.0" fill="none" stroke="#0000ff" stroke-width="1" stroke-linejoin="round" shape-rendering="crispEdges"/><g shape-rendering="crispEdges"><path d="M76.5 379 V551" stroke="#d9d9d9" stroke-dasharray="3 3"/><path d="M93.5 379 V551" stroke="#d9d9d9" stroke-dasharray="3 3"/><path d="M111.5 379 V551" stroke="#d9d9d9" stroke-dasharray="3 3"/><path d="M128.5 379 V551" stroke="#d9d9d9" stroke-dasharray="3 3"/><path d="M145.5 379 V551" stroke="#d9d9d9" stroke-dasharray="3 3"/><path d="M162.5 379 V551" stroke="#d9d9d9" stroke-dasharray="3 3"/><path d="M179.5 379 V551" stroke="#d9d9d9" stroke-dasharray="3 3"/><path d="M197.5 379 V551" stroke="#d9d9d9" stroke-dasharray="3 3"/><path d="M214.5 379 V551" stroke="#d9d9d9" stroke-dasharray="3 3"/><path d="M231.5 379 V551" stroke="#d9d9d9" stroke-dasharray="3 3"/><path d="M248.5 379 V551" stroke="#d9d9d9" stroke-dasharray="3 3"/><path d="M265.5 379 V551" stroke="#d9d9d9" stroke-dasharray="3 3"/><path d="M283.5 379 V551" stroke="#d9d9d9" stroke-dasharray="3 3"/><path d="M300.5 379 V551" stroke="#d9d9d9" stroke-dasharray="3 3"/><path d="M317.5 379 V551" stroke="#d9d9d9" stroke-dasharray="3 3"/><path d="M334.5 379 V551" stroke="#d9d9d9" stroke-dasharray="3 3"/><path d="M351.5 379 V551" stroke="#d9d9d9" stroke-dasharray="3 3"/><path d="M369.5 379 V551" stroke="#d9d9d9" stroke-dasharray="3 3"/><path d="M386.5 379 V551" stroke="#d9d9d9" stroke-dasharray="3 3"/><path d="M403.5 379 V551" stroke="#d9d9d9" stroke-dasharray="3 3"/><path d="M420.5 379 V551" stroke="#d9d9d9" stroke-dasharray="3 3"/><path d="M437.5 379 V551" stroke="#d9d9d9" stroke-dasharray="3 3"/><path d="M455.5 379 V551" stroke="#d9d9d9" stroke-dasharray="3 3"/><path d="M472.5 379 V551" stroke="#d9d9d9" stroke-dasharray="3 3"/><path d="M489.5 379 V551" stroke="#d9d9d9" stroke-dasharray="3 3"/><path d="M506.5 379 V551" stroke="#d9d9d9" stroke-dasharray="3 3"/><path d="M523.5 379 V551" stroke="#d9d9d9" stroke-dasharray="3 3"/><path d="M541.5 379 V551" stroke="#d9d9d9" stroke-dasharray="3 3"/><path d="M558.5 379 V551" stroke="#d9d9d9" stroke-dasharray="3 3"/><path d="M575.5 379 V551" stroke="#d9d9d9" stroke-dasharray="3 3"/><path d="M592.5 379 V551" stroke="#d9d9d9" stroke-dasharray="3 3"/><path d="M609.5 379 V551" stroke="#d9d9d9" stroke-dasharray="3 3"/><path d="M627.5 379 V551" stroke="#d9d9d9" stroke-dasharray="3 3"/><path d="M644.5 379 V551" stroke="#d9d9d9" stroke-dasharray="3 3"/><path d="M661.5 379 V551" stroke="#d9d9d9" stroke-dasharray="3 3"/><path d="M678.5 379 V551" stroke="#d9d9d9" stroke-dasharray="3 3"/><path d="M695.5 379 V551" stroke="#d9d9d9" stroke-dasharray="3 3"/><path d="M713.5 379 V551" stroke="#d9d9d9" stroke-dasharray="3 3"/><path d="M730.5 379 V551" stroke="#d9d9d9" stroke-dasharray="3 3"/><path d="M747.5 379 V551" stroke="#d9d9d9" stroke-dasharray="3 3"/><path d="M764.5 379 V551" stroke="#d9d9d9" stroke-dasharray="3 3"/><path d="M781.5 379 V551" stroke="#d9d9d9" stroke-dasharray="3 3"/><path d="M799.5 379 V551" stroke="#d9d9d9" stroke-dasharray="3 3"/><path d="M816.5 379 V551" stroke="#d9d9d9" stroke-dasharray="3 3"/><path d="M833.5 379 V551" stroke="#d9d9d9" stroke-dasharray="3 3"/><path d="M850.5 379 V551" stroke="#d9d9d9" stroke-dasharray="3 3"/><path d="M867.5 379 V551" stroke="#d9d9d9" stroke-dasharray="3 3"/><path d="M885.5 379 V551" stroke="#d9d9d9" stroke-dasharray="3 3"/><path d="M68 411.5 H892" stroke="#d9d9d9" stroke-dasharray="3 3" stroke-dashoffset="1"/><path d="M68 448.5 H892" stroke="#d9d9d9" stroke-dasharray="3 3" stroke-dashoffset="1"/><path d="M68 486.5 H892" stroke="#d9d9d9" stroke-dasharray="3 3" stroke-dashoffset="1"/><path d="M68 523.5 H892" stroke="#d9d9d9" stroke-dasharray="3 3" stroke-dashoffset="1"/><path d="M67.5 373.5 H892.5 V551.5 H67.5 Z" fill="none" stroke="#000"/><rect x="67" y="373" width="8" height="8" fill="#fff"/><path d="M67.5 381 V551" stroke="#000"/><path d="M68 373.5 H74" stroke="#000" stroke-dasharray="1 1"/><path d="M67.5 374 V381" stroke="#000" stroke-dasharray="1 1"/><path d="M69 377.5 H74 M71.5 375 V380" stroke="#000"/></g><path d="M78 366.5 H100" stroke="#0000ff" stroke-width="1" shape-rendering="crispEdges"/><path d="M67.5 383.8 L80.0 383.2 L85.0 380.5 L100.0 378.0 L120.0 377.0 L197.5 377.0 L201.2 378.2 L238.8 378.2 L241.2 379.5 L282.5 379.5 L285.0 380.5 L312.5 380.5 L315.0 381.5 L323.8 381.5 L326.2 382.5 L360.0 382.5 L361.2 383.5 L363.0 382.5 L363.8 383.5 L420.0 383.5 L421.2 384.2 L456.2 384.2 L457.5 385.2 L476.2 385.2 L477.7 386.2 L494.3 386.8 L502.0 388.3 L521.2 388.8 L539.1 390.1 L546.8 393.9 L555.7 397.5 L559.6 400.8 L563.4 401.3 L571.1 398.3 L578.8 398.0 L583.9 396.2 L587.7 396.5 L592.9 398.3 L604.4 398.3 L609.5 396.5 L621.0 396.2 L626.1 394.4 L633.8 394.9 L638.9 393.7 L644.0 394.7 L647.9 396.2 L654.3 396.5 L660.7 399.0 L665.8 402.9 L669.6 403.4 L674.8 401.6 L677.8 403.4 L681.2 409.8 L683.0 420.0 L685.0 434.1 L686.8 450.7 L688.8 451.3 L690.6 448.2 L692.2 449.5 L694.0 445.1 L695.2 446.9 L696.3 455.4 L697.3 450.7 L698.3 453.3 L700.4 446.4 L704.2 449.5 L706.8 450.7 L709.3 447.7 L711.9 457.1 L715.7 453.3 L717.8 444.3 L720.3 439.2 L722.1 444.3 L725.4 450.0 L728.5 442.3 L731.6 446.9 L736.2 453.3 L738.8 452.5 L744.4 456.4 L746.9 450.7 L749.0 445.6 L752.8 446.9 L756.7 446.4 L761.8 449.5 L765.6 447.4 L768.2 443.1 L772.0 435.4 L777.1 425.1 L783.5 417.5 L788.7 412.4 L793.0 411.1 L798.9 405.4 L805.3 402.6 L814.3 397.5 L823.2 393.7 L833.5 393.2 L842.4 391.1 L848.8 388.5 L859.0 386.8 L870.6 383.4 L877.0 383.9 L884.6 382.9 L891.8 382.1" fill="none" stroke="#0000ff" stroke-width="1" stroke-linejoin="round" shape-rendering="crispEdges"/><g shape-rendering="crispEdges"><path d="M76.5 586 V758" stroke="#d9d9d9" stroke-dasharray="3 3"/><path d="M93.5 586 V758" stroke="#d9d9d9" stroke-dasharray="3 3"/><path d="M111.5 586 V758" stroke="#d9d9d9" stroke-dasharray="3 3"/><path d="M128.5 586 V758" stroke="#d9d9d9" stroke-dasharray="3 3"/><path d="M145.5 586 V758" stroke="#d9d9d9" stroke-dasharray="3 3"/><path d="M162.5 586 V758" stroke="#d9d9d9" stroke-dasharray="3 3"/><path d="M179.5 586 V758" stroke="#d9d9d9" stroke-dasharray="3 3"/><path d="M197.5 586 V758" stroke="#d9d9d9" stroke-dasharray="3 3"/><path d="M214.5 586 V758" stroke="#d9d9d9" stroke-dasharray="3 3"/><path d="M231.5 586 V758" stroke="#d9d9d9" stroke-dasharray="3 3"/><path d="M248.5 586 V758" stroke="#d9d9d9" stroke-dasharray="3 3"/><path d="M265.5 586 V758" stroke="#d9d9d9" stroke-dasharray="3 3"/><path d="M283.5 586 V758" stroke="#d9d9d9" stroke-dasharray="3 3"/><path d="M300.5 586 V758" stroke="#d9d9d9" stroke-dasharray="3 3"/><path d="M317.5 586 V758" stroke="#d9d9d9" stroke-dasharray="3 3"/><path d="M334.5 586 V758" stroke="#d9d9d9" stroke-dasharray="3 3"/><path d="M351.5 586 V758" stroke="#d9d9d9" stroke-dasharray="3 3"/><path d="M369.5 586 V758" stroke="#d9d9d9" stroke-dasharray="3 3"/><path d="M386.5 586 V758" stroke="#d9d9d9" stroke-dasharray="3 3"/><path d="M403.5 586 V758" stroke="#d9d9d9" stroke-dasharray="3 3"/><path d="M420.5 586 V758" stroke="#d9d9d9" stroke-dasharray="3 3"/><path d="M437.5 586 V758" stroke="#d9d9d9" stroke-dasharray="3 3"/><path d="M455.5 586 V758" stroke="#d9d9d9" stroke-dasharray="3 3"/><path d="M472.5 586 V758" stroke="#d9d9d9" stroke-dasharray="3 3"/><path d="M489.5 586 V758" stroke="#d9d9d9" stroke-dasharray="3 3"/><path d="M506.5 586 V758" stroke="#d9d9d9" stroke-dasharray="3 3"/><path d="M523.5 586 V758" stroke="#d9d9d9" stroke-dasharray="3 3"/><path d="M541.5 586 V758" stroke="#d9d9d9" stroke-dasharray="3 3"/><path d="M558.5 586 V758" stroke="#d9d9d9" stroke-dasharray="3 3"/><path d="M575.5 586 V758" stroke="#d9d9d9" stroke-dasharray="3 3"/><path d="M592.5 586 V758" stroke="#d9d9d9" stroke-dasharray="3 3"/><path d="M609.5 586 V758" stroke="#d9d9d9" stroke-dasharray="3 3"/><path d="M627.5 586 V758" stroke="#d9d9d9" stroke-dasharray="3 3"/><path d="M644.5 586 V758" stroke="#d9d9d9" stroke-dasharray="3 3"/><path d="M661.5 586 V758" stroke="#d9d9d9" stroke-dasharray="3 3"/><path d="M678.5 586 V758" stroke="#d9d9d9" stroke-dasharray="3 3"/><path d="M695.5 586 V758" stroke="#d9d9d9" stroke-dasharray="3 3"/><path d="M713.5 586 V758" stroke="#d9d9d9" stroke-dasharray="3 3"/><path d="M730.5 586 V758" stroke="#d9d9d9" stroke-dasharray="3 3"/><path d="M747.5 586 V758" stroke="#d9d9d9" stroke-dasharray="3 3"/><path d="M764.5 586 V758" stroke="#d9d9d9" stroke-dasharray="3 3"/><path d="M781.5 586 V758" stroke="#d9d9d9" stroke-dasharray="3 3"/><path d="M799.5 586 V758" stroke="#d9d9d9" stroke-dasharray="3 3"/><path d="M816.5 586 V758" stroke="#d9d9d9" stroke-dasharray="3 3"/><path d="M833.5 586 V758" stroke="#d9d9d9" stroke-dasharray="3 3"/><path d="M850.5 586 V758" stroke="#d9d9d9" stroke-dasharray="3 3"/><path d="M867.5 586 V758" stroke="#d9d9d9" stroke-dasharray="3 3"/><path d="M885.5 586 V758" stroke="#d9d9d9" stroke-dasharray="3 3"/><path d="M68 611.5 H892" stroke="#d9d9d9" stroke-dasharray="3 3" stroke-dashoffset="1"/><path d="M68 656.5 H892" stroke="#d9d9d9" stroke-dasharray="3 3" stroke-dashoffset="1"/><path d="M68 700.5 H892" stroke="#d9d9d9" stroke-dasharray="3 3" stroke-dashoffset="1"/><path d="M68 745.5 H892" stroke="#d9d9d9" stroke-dasharray="3 3" stroke-dashoffset="1"/><path d="M67.5 580.5 H892.5 V758.5 H67.5 Z" fill="none" stroke="#000"/><rect x="67" y="580" width="8" height="8" fill="#fff"/><path d="M67.5 588 V758" stroke="#000"/><path d="M68 580.5 H74" stroke="#000" stroke-dasharray="1 1"/><path d="M67.5 581 V588" stroke="#000" stroke-dasharray="1 1"/><path d="M69 584.5 H74 M71.5 582 V587" stroke="#000"/></g><path d="M78 573.5 H100" stroke="#0000ff" stroke-width="1" shape-rendering="crispEdges"/><path d="M67.5 736.5 L75.0 735.2 L83.8 735.2 L91.2 737.2 L100.0 737.8 L117.5 739.8 L137.5 742.0 L155.0 743.0 L172.5 744.2 L190.0 745.0 L207.5 746.2 L225.0 747.0 L247.5 748.0 L292.5 748.5 L296.2 749.2 L470.0 749.2 L470.0 749.1 L485.4 747.6 L505.8 745.5 L521.2 744.0 L537.8 741.7 L545.5 737.1 L554.5 733.2 L560.9 728.1 L571.1 728.6 L577.5 727.4 L584.7 729.4 L591.6 726.3 L604.4 724.8 L610.8 726.1 L621.0 725.6 L627.4 726.3 L637.6 726.3 L646.6 724.3 L654.3 721.7 L660.7 718.7 L664.5 714.6 L670.9 713.3 L673.5 715.3 L677.3 711.5 L680.4 703.8 L682.4 694.9 L683.7 674.4 L685.5 661.6 L686.8 649.3 L689.6 649.3 L691.4 651.9 L693.2 655.2 L694.7 643.7 L696.3 627.0 L698.3 644.9 L700.4 637.3 L702.9 632.1 L705.5 625.2 L707.0 628.8 L708.5 632.1 L710.1 614.2 L711.4 602.7 L712.6 613.0 L713.7 610.4 L714.7 617.6 L715.7 613.0 L717.0 628.3 L718.3 630.9 L720.3 627.0 L722.1 614.2 L723.4 616.8 L724.9 604.0 L726.5 620.6 L728.0 613.0 L729.8 609.1 L732.4 602.7 L736.2 596.3 L738.2 598.4 L740.8 592.5 L743.4 588.6 L745.1 598.9 L746.4 597.6 L748.5 609.9 L751.5 604.0 L754.1 607.3 L756.7 605.3 L760.5 604.5 L764.3 611.7 L770.7 624.0 L777.1 633.4 L787.4 645.7 L792.5 648.8 L800.2 657.7 L805.3 661.6 L813.0 670.5 L823.2 677.5 L833.5 682.6 L846.2 691.0 L859.0 697.4 L870.6 703.8 L877.0 705.1 L891.8 711.5" fill="none" stroke="#0000ff" stroke-width="1" stroke-linejoin="round" shape-rendering="crispEdges"/><g shape-rendering="crispEdges"><path d="M76.5 793 V978" stroke="#d9d9d9" stroke-dasharray="3 3"/><path d="M93.5 793 V978" stroke="#d9d9d9" stroke-dasharray="3 3"/><path d="M111.5 793 V978" stroke="#d9d9d9" stroke-dasharray="3 3"/><path d="M128.5 793 V978" stroke="#d9d9d9" stroke-dasharray="3 3"/><path d="M145.5 793 V978" stroke="#d9d9d9" stroke-dasharray="3 3"/><path d="M162.5 793 V978" stroke="#d9d9d9" stroke-dasharray="3 3"/><path d="M179.5 793 V978" stroke="#d9d9d9" stroke-dasharray="3 3"/><path d="M197.5 793 V978" stroke="#d9d9d9" stroke-dasharray="3 3"/><path d="M214.5 793 V978" stroke="#d9d9d9" stroke-dasharray="3 3"/><path d="M231.5 793 V978" stroke="#d9d9d9" stroke-dasharray="3 3"/><path d="M248.5 793 V978" stroke="#d9d9d9" stroke-dasharray="3 3"/><path d="M265.5 793 V978" stroke="#d9d9d9" stroke-dasharray="3 3"/><path d="M283.5 793 V978" stroke="#d9d9d9" stroke-dasharray="3 3"/><path d="M300.5 793 V978" stroke="#d9d9d9" stroke-dasharray="3 3"/><path d="M317.5 793 V978" stroke="#d9d9d9" stroke-dasharray="3 3"/><path d="M334.5 793 V978" stroke="#d9d9d9" stroke-dasharray="3 3"/><path d="M351.5 793 V978" stroke="#d9d9d9" stroke-dasharray="3 3"/><path d="M369.5 793 V978" stroke="#d9d9d9" stroke-dasharray="3 3"/><path d="M386.5 793 V978" stroke="#d9d9d9" stroke-dasharray="3 3"/><path d="M403.5 793 V978" stroke="#d9d9d9" stroke-dasharray="3 3"/><path d="M420.5 793 V978" stroke="#d9d9d9" stroke-dasharray="3 3"/><path d="M437.5 793 V978" stroke="#d9d9d9" stroke-dasharray="3 3"/><path d="M455.5 793 V978" stroke="#d9d9d9" stroke-dasharray="3 3"/><path d="M472.5 793 V978" stroke="#d9d9d9" stroke-dasharray="3 3"/><path d="M489.5 793 V978" stroke="#d9d9d9" stroke-dasharray="3 3"/><path d="M506.5 793 V978" stroke="#d9d9d9" stroke-dasharray="3 3"/><path d="M523.5 793 V978" stroke="#d9d9d9" stroke-dasharray="3 3"/><path d="M541.5 793 V978" stroke="#d9d9d9" stroke-dasharray="3 3"/><path d="M558.5 793 V978" stroke="#d9d9d9" stroke-dasharray="3 3"/><path d="M575.5 793 V978" stroke="#d9d9d9" stroke-dasharray="3 3"/><path d="M592.5 793 V978" stroke="#d9d9d9" stroke-dasharray="3 3"/><path d="M609.5 793 V978" stroke="#d9d9d9" stroke-dasharray="3 3"/><path d="M627.5 793 V978" stroke="#d9d9d9" stroke-dasharray="3 3"/><path d="M644.5 793 V978" stroke="#d9d9d9" stroke-dasharray="3 3"/><path d="M661.5 793 V978" stroke="#d9d9d9" stroke-dasharray="3 3"/><path d="M678.5 793 V978" stroke="#d9d9d9" stroke-dasharray="3 3"/><path d="M695.5 793 V978" stroke="#d9d9d9" stroke-dasharray="3 3"/><path d="M713.5 793 V978" stroke="#d9d9d9" stroke-dasharray="3 3"/><path d="M730.5 793 V978" stroke="#d9d9d9" stroke-dasharray="3 3"/><path d="M747.5 793 V978" stroke="#d9d9d9" stroke-dasharray="3 3"/><path d="M764.5 793 V978" stroke="#d9d9d9" stroke-dasharray="3 3"/><path d="M781.5 793 V978" stroke="#d9d9d9" stroke-dasharray="3 3"/><path d="M799.5 793 V978" stroke="#d9d9d9" stroke-dasharray="3 3"/><path d="M816.5 793 V978" stroke="#d9d9d9" stroke-dasharray="3 3"/><path d="M833.5 793 V978" stroke="#d9d9d9" stroke-dasharray="3 3"/><path d="M850.5 793 V978" stroke="#d9d9d9" stroke-dasharray="3 3"/><path d="M867.5 793 V978" stroke="#d9d9d9" stroke-dasharray="3 3"/><path d="M885.5 793 V978" stroke="#d9d9d9" stroke-dasharray="3 3"/><path d="M68 792.5 H892" stroke="#d9d9d9" stroke-dasharray="3 3" stroke-dashoffset="1"/><path d="M68 828.5 H892" stroke="#d9d9d9" stroke-dasharray="3 3" stroke-dashoffset="1"/><path d="M68 865.5 H892" stroke="#d9d9d9" stroke-dasharray="3 3" stroke-dashoffset="1"/><path d="M68 902.5 H892" stroke="#d9d9d9" stroke-dasharray="3 3" stroke-dashoffset="1"/><path d="M68 939.5 H892" stroke="#d9d9d9" stroke-dasharray="3 3" stroke-dashoffset="1"/><path d="M68 975.5 H892" stroke="#d9d9d9" stroke-dasharray="3 3" stroke-dashoffset="1"/><path d="M67.5 787.5 H892.5 V978.5 H67.5 Z" fill="none" stroke="#000"/><rect x="67" y="787" width="8" height="8" fill="#fff"/><path d="M67.5 795 V978" stroke="#000"/><path d="M68 787.5 H74" stroke="#000" stroke-dasharray="1 1"/><path d="M67.5 788 V795" stroke="#000" stroke-dasharray="1 1"/><path d="M69 791.5 H74 M71.5 789 V794" stroke="#000"/></g><path d="M78 780.5 H100" stroke="#0000ff" stroke-width="1" shape-rendering="crispEdges"/><path d="M67.5 966.2 L68.2 952.5 L71.2 930.0 L76.2 908.8 L81.2 896.2 L86.2 886.2 L91.2 878.8 L97.5 874.2 L102.5 875.8 L107.5 879.5 L112.5 881.5 L116.2 878.8 L121.2 870.0 L126.2 865.8 L132.5 864.2 L145.0 862.0 L167.5 859.2 L177.5 855.8 L190.0 853.5 L207.5 853.5 L215.0 854.8 L235.0 854.8 L245.0 853.0 L270.0 846.5 L302.5 840.8 L320.0 838.8 L351.2 832.0 L360.0 831.8 L385.0 828.0 L400.0 826.5 L415.0 822.5 L435.0 819.5 L455.0 816.8 L470.0 815.5 L470.0 815.3 L475.1 813.8 L482.8 813.8 L498.2 811.5 L516.1 811.5 L523.8 810.2 L536.5 811.2 L544.2 809.2 L550.6 812.8 L557.0 812.8 L567.3 816.3 L577.5 813.3 L582.6 814.8 L589.0 810.2 L605.7 810.7 L609.5 812.0 L615.9 809.4 L624.9 810.5 L632.5 806.4 L637.6 807.6 L647.9 804.6 L656.8 805.3 L660.7 806.9 L663.2 804.8 L669.6 808.2 L673.5 811.2 L678.6 805.6 L683.0 796.6 L685.0 796.1 L687.0 804.3 L688.8 815.8 L690.6 824.8 L692.2 835.0 L694.0 829.9 L695.2 837.6 L696.0 826.1 L697.0 841.4 L698.3 856.8 L699.8 850.4 L701.6 849.1 L703.4 852.9 L705.0 850.4 L706.2 868.3 L707.5 861.9 L708.8 873.4 L710.1 850.4 L711.4 851.2 L712.4 877.3 L713.7 874.7 L714.9 887.5 L715.7 882.4 L717.0 913.1 L717.8 906.7 L718.8 915.7 L720.3 890.1 L721.6 873.4 L722.9 882.4 L723.9 879.8 L725.2 875.2 L726.5 913.9 L728.0 900.3 L729.3 890.1 L731.6 892.6 L734.9 900.3 L737.0 908.0 L738.8 919.5 L740.8 914.4 L743.4 919.5 L745.1 941.2 L746.4 943.8 L747.5 950.2 L748.5 953.5 L749.5 936.1 L751.5 924.6 L754.1 922.1 L757.2 914.4 L760.5 904.1 L763.1 902.9 L766.9 904.6 L770.7 895.2 L775.9 887.5 L783.5 874.7 L789.9 865.7 L797.6 860.6 L806.6 852.4 L809.1 854.2 L816.8 847.8 L828.3 842.7 L838.6 840.7 L853.9 833.8 L865.4 829.9 L874.4 826.1 L884.6 824.8 L891.8 820.4" fill="none" stroke="#0000ff" stroke-width="1" stroke-linejoin="round" shape-rendering="crispEdges"/><g shape-rendering="crispEdges"><path d="M76.5 979 V984" stroke="#000"/><path d="M111.5 979 V984" stroke="#000"/><path d="M145.5 979 V984" stroke="#000"/><path d="M179.5 979 V984" stroke="#000"/><path d="M214.5 979 V984" stroke="#000"/><path d="M248.5 979 V984" stroke="#000"/><path d="M283.5 979 V984" stroke="#000"/><path d="M317.5 979 V984" stroke="#000"/><path d="M351.5 979 V984" stroke="#000"/><path d="M386.5 979 V984" stroke="#000"/><path d="M420.5 979 V984" stroke="#000"/><path d="M455.5 979 V984" stroke="#000"/><path d="M489.5 979 V984" stroke="#000"/><path d="M523.5 979 V984" stroke="#000"/><path d="M558.5 979 V984" stroke="#000"/><path d="M592.5 979 V984" stroke="#000"/><path d="M627.5 979 V984" stroke="#000"/><path d="M661.5 979 V984" stroke="#000"/><path d="M695.5 979 V984" stroke="#000"/><path d="M730.5 979 V984" stroke="#000"/><path d="M764.5 979 V984" stroke="#000"/><path d="M799.5 979 V984" stroke="#000"/><path d="M833.5 979 V984" stroke="#000"/><path d="M867.5 979 V984" stroke="#000"/></g></svg>
<div class="tx">
<div class="t" style="left:8.58px;top:2px;transform:scaleX(0.8992)">t=08:40:40 y=71.0 ;</div>
<div class="t" style="left:103.88px;top:29px;transform:scaleX(0.8951)">Light</div>
<div class="t" style="left:-41.68px;width:100px;text-align:right;top:70px;transform-origin:100% 0;transform:scaleX(0.905)">80</div>
<div class="t" style="left:-41.68px;width:100px;text-align:right;top:103px;transform-origin:100% 0;transform:scaleX(0.905)">60</div>
<div class="t" style="left:-41.68px;width:100px;text-align:right;top:137px;transform-origin:100% 0;transform:scaleX(0.905)">40</div>
<div class="t" style="left:-41.68px;width:100px;text-align:right;top:170px;transform-origin:100% 0;transform:scaleX(0.905)">20</div>
<div class="t" style="left:-41.68px;width:100px;text-align:right;top:204px;transform-origin:100% 0;transform:scaleX(0.905)">0</div>
<div class="t" style="left:103.90px;top:236px;transform:scaleX(0.8693)">External 1 Oxygen %</div>
<div class="t" style="left:-38.11px;width:100px;text-align:right;top:236px;transform-origin:100% 0;transform:scaleX(0.86)">%</div>
<div class="t" style="left:-41.68px;width:100px;text-align:right;top:276px;transform-origin:100% 0;transform:scaleX(0.905)">20</div>
<div class="t" style="left:-41.68px;width:100px;text-align:right;top:313px;transform-origin:100% 0;transform:scaleX(0.905)">19</div>
<div class="t" style="left:-41.68px;width:100px;text-align:right;top:351px;transform-origin:100% 0;transform:scaleX(0.905)">18</div>
<div class="t" style="left:-41.68px;width:100px;text-align:right;top:388px;transform-origin:100% 0;transform:scaleX(0.905)">17</div>
<div class="t" style="left:103.90px;top:443px;transform:scaleX(0.8805)">External 3 Temperature</div>
<div class="t" style="left:-38.11px;width:100px;text-align:right;top:443px;transform-origin:100% 0;transform:scaleX(0.86)">°C</div>
<div class="t" style="left:-41.68px;width:100px;text-align:right;top:476px;transform-origin:100% 0;transform:scaleX(0.905)">30</div>
<div class="t" style="left:-41.68px;width:100px;text-align:right;top:521px;transform-origin:100% 0;transform:scaleX(0.905)">25</div>
<div class="t" style="left:-41.68px;width:100px;text-align:right;top:565px;transform-origin:100% 0;transform:scaleX(0.905)">20</div>
<div class="t" style="left:-41.68px;width:100px;text-align:right;top:610px;transform-origin:100% 0;transform:scaleX(0.905)">15</div>
<div class="t" style="left:103.90px;top:650px;transform:scaleX(0.8698)">External 2 Humidity</div>
<div class="t" style="left:-38.11px;width:100px;text-align:right;top:650px;transform-origin:100% 0;transform:scaleX(0.86)">%</div>
<div class="t" style="left:-41.68px;width:100px;text-align:right;top:693px;transform-origin:100% 0;transform:scaleX(0.905)">75</div>
<div class="t" style="left:-41.68px;width:100px;text-align:right;top:730px;transform-origin:100% 0;transform:scaleX(0.905)">74</div>
<div class="t" style="left:-41.68px;width:100px;text-align:right;top:767px;transform-origin:100% 0;transform:scaleX(0.905)">73</div>
<div class="t" style="left:-41.68px;width:100px;text-align:right;top:804px;transform-origin:100% 0;transform:scaleX(0.905)">72</div>
<div class="t" style="left:-41.68px;width:100px;text-align:right;top:840px;transform-origin:100% 0;transform:scaleX(0.905)">71</div>
<div class="t" style="left:9.10px;width:120px;text-align:center;top:860px;transform-origin:50% 0;transform:scaleX(0.905)">19:00</div>
<div class="t" style="left:44.10px;width:120px;text-align:center;top:860px;transform-origin:50% 0;transform:scaleX(0.905)">20:00</div>
<div class="t" style="left:78.10px;width:120px;text-align:center;top:860px;transform-origin:50% 0;transform:scaleX(0.905)">21:00</div>
<div class="t" style="left:112.10px;width:120px;text-align:center;top:860px;transform-origin:50% 0;transform:scaleX(0.905)">22:00</div>
<div class="t" style="left:147.10px;width:120px;text-align:center;top:860px;transform-origin:50% 0;transform:scaleX(0.905)">23:00</div>
<div class="t" style="left:181.10px;width:120px;text-align:center;top:860px;transform-origin:50% 0;transform:scaleX(0.905)">00:00</div>
<div class="t" style="left:216.10px;width:120px;text-align:center;top:860px;transform-origin:50% 0;transform:scaleX(0.905)">01:00</div>
<div class="t" style="left:250.10px;width:120px;text-align:center;top:860px;transform-origin:50% 0;transform:scaleX(0.905)">02:00</div>
<div class="t" style="left:284.10px;width:120px;text-align:center;top:860px;transform-origin:50% 0;transform:scaleX(0.905)">03:00</div>
<div class="t" style="left:319.10px;width:120px;text-align:center;top:860px;transform-origin:50% 0;transform:scaleX(0.905)">04:00</div>
<div class="t" style="left:353.10px;width:120px;text-align:center;top:860px;transform-origin:50% 0;transform:scaleX(0.905)">05:00</div>
<div class="t" style="left:388.10px;width:120px;text-align:center;top:860px;transform-origin:50% 0;transform:scaleX(0.905)">06:00</div>
<div class="t" style="left:422.10px;width:120px;text-align:center;top:860px;transform-origin:50% 0;transform:scaleX(0.905)">07:00</div>
<div class="t" style="left:456.10px;width:120px;text-align:center;top:860px;transform-origin:50% 0;transform:scaleX(0.905)">08:00</div>
<div class="t" style="left:491.10px;width:120px;text-align:center;top:860px;transform-origin:50% 0;transform:scaleX(0.905)">09:00</div>
<div class="t" style="left:525.10px;width:120px;text-align:center;top:860px;transform-origin:50% 0;transform:scaleX(0.905)">10:00</div>
<div class="t" style="left:560.10px;width:120px;text-align:center;top:860px;transform-origin:50% 0;transform:scaleX(0.905)">11:00</div>
<div class="t" style="left:594.10px;width:120px;text-align:center;top:860px;transform-origin:50% 0;transform:scaleX(0.905)">12:00</div>
<div class="t" style="left:628.10px;width:120px;text-align:center;top:860px;transform-origin:50% 0;transform:scaleX(0.905)">13:00</div>
<div class="t" style="left:663.10px;width:120px;text-align:center;top:860px;transform-origin:50% 0;transform:scaleX(0.905)">14:00</div>
<div class="t" style="left:697.10px;width:120px;text-align:center;top:860px;transform-origin:50% 0;transform:scaleX(0.905)">15:00</div>
<div class="t" style="left:732.10px;width:120px;text-align:center;top:860px;transform-origin:50% 0;transform:scaleX(0.905)">16:00</div>
<div class="t" style="left:766.10px;width:120px;text-align:center;top:860px;transform-origin:50% 0;transform:scaleX(0.905)">17:00</div>
<div class="t" style="left:800.10px;width:120px;text-align:center;top:860px;transform-origin:50% 0;transform:scaleX(0.905)">18:00</div>
</div>
</div>
</div>
<div class="abs" style="left:0;top:0;width:935px;height:917px;border-radius:7px 0 6px 6px;box-shadow:inset 0 0 0 1px rgba(8,20,50,.8),inset 0 0 0 2px rgba(255,255,255,.5)"></div>
</div>
<div class="win" id="notes" style="left:4px;top:0;width:934px;height:95px;border-radius:7px;background:linear-gradient(to right,#6d8bb6 0,#5d7fb0 40px,#1c4887 160px,#1b4785 700px,#2a5590 830px,#5c80b0 900px,#7090bb 934px);box-shadow:inset 0 0 0 1px rgba(8,20,50,.85),inset 0 0 0 2px rgba(255,255,255,.55),0 1px 11px 2px rgba(0,0,0,.62)">
<div class="abs" style="left:2px;top:29px;width:930px;height:64px;background:linear-gradient(to right,#6a89b6 0,#6a89b6 8px,#4a74ad 50px,#2f5ea1 130px,#28589c 600px,#3f6ea9 820px,#6388b9 900px,#7396c2 930px)"></div>
<div class="abs" style="left:-25px;top:-4px;width:150px;height:52px;background:radial-gradient(closest-side,rgba(205,225,248,.85),rgba(150,182,225,.45) 50%,rgba(120,150,200,0) 100%)"></div>
<div class="abs" style="left:2px;top:8px;width:5px;height:80px;background:linear-gradient(rgba(255,255,255,.12) 0,rgba(255,255,255,.2) 30px,rgba(255,255,255,.55) 35px,rgba(255,255,255,.05) 40px,rgba(0,0,40,.12) 44px,rgba(0,0,40,.08) 80px)"></div>
<svg class="abs" style="left:7px;top:6px" width="18" height="18" viewBox="0 0 19 19"><g fill-rule="evenodd"><path d="M1 1 H7.6 Q11 1 11 4.3 Q11 7.6 7.6 7.6 H6.3 V11.4 H7.4 V12.8 H1 V11.4 H2.1 V2.4 H1 Z M6.3 2.6 H7 Q8.1 2.6 8.1 4.3 Q8.1 6.1 7 6.1 H6.3 Z" transform="translate(0.6,0.6)" fill="#001818" stroke="#001818" stroke-width="0.9"/><path d="M1 1 H7.6 Q11 1 11 4.3 Q11 7.6 7.6 7.6 H6.3 V11.4 H7.4 V12.8 H1 V11.4 H2.1 V2.4 H1 Z M6.3 2.6 H7 Q8.1 2.6 8.1 4.3 Q8.1 6.1 7 6.1 H6.3 Z" fill="#00ffff" stroke="#007c7c" stroke-width="0.35"/><path d="M6.4 5.2 H12.2 V6.5 H11.2 V15.3 H14.2 Q15.8 15.2 16.2 12.8 H17.3 V17 H6.4 V15.7 H7.5 V6.5 H6.4 Z" transform="translate(0.6,0.6)" fill="#001818" stroke="#001818" stroke-width="0.9"/><path d="M6.4 5.2 H12.2 V6.5 H11.2 V15.3 H14.2 Q15.8 15.2 16.2 12.8 H17.3 V17 H6.4 V15.7 H7.5 V6.5 H6.4 Z" fill="#00ffff" stroke="#007c7c" stroke-width="0.35"/></g></svg>
<div class="ttl" style="left:29.5px;top:8px;letter-spacing:0.228px">Notes</div>
<svg class="abs" style="left:823px;top:1px" width="104" height="20" viewBox="0 0 104 20"><defs><linearGradient id="gA" x1="0" y1="0" x2="0" y2="1"><stop offset="0" stop-color="#b4c6dc"/><stop offset="0.45" stop-color="#93abc9"/><stop offset="0.5" stop-color="#5f80aa"/><stop offset="1" stop-color="#7595bf"/></linearGradient><linearGradient id="gR" x1="0" y1="0" x2="0" y2="1"><stop offset="0" stop-color="#e6a99d"/><stop offset="0.45" stop-color="#d47a6c"/><stop offset="0.5" stop-color="#b83321"/><stop offset="1" stop-color="#d0573c"/></linearGradient></defs><path d="M0.5 0 V14 Q0.5 18.5 5 18.5 H99 Q103.5 18.5 103.5 14 V0 Z" fill="url(#gA)" stroke="none"/><path d="M56 0 H103.5 V14 Q103.5 18.5 99 18.5 H56 Z" fill="url(#gR)"/><path d="M0.5 0 V14 Q0.5 18.5 5 18.5 H99 Q103.5 18.5 103.5 14 V0" fill="none" stroke="rgba(10,25,60,0.75)" stroke-width="1"/><path d="M1.5 0 V14 Q1.5 17.5 5 17.5 H99 Q102.5 17.5 102.5 14 V0" fill="none" stroke="rgba(255,255,255,0.45)" stroke-width="1"/><path d="M28.5 0 V18" stroke="rgba(10,25,60,0.6)"/><path d="M29.5 0 V17" stroke="rgba(255,255,255,0.45)"/><path d="M27.5 0 V17" stroke="rgba(255,255,255,0.25)"/><path d="M55.5 0 V18" stroke="rgba(10,25,60,0.6)"/><path d="M56.5 0 V17" stroke="rgba(255,255,255,0.45)"/><path d="M54.5 0 V17" stroke="rgba(255,255,255,0.25)"/><rect x="10.1" y="9.5" width="11" height="4" rx="0.8" fill="#f6f6f6" stroke="#37465f" stroke-width="1"/><rect x="38.7" y="5.4" width="8" height="6.4" fill="none" stroke="#37465f" stroke-width="3" stroke-linejoin="round"/><rect x="38.7" y="5.4" width="8" height="6.4" fill="none" stroke="#f6f6f6" stroke-width="2"/><path d="M76.9 5.2 L84.1 12.8 M84.1 5.2 L76.9 12.8" stroke="#37465f" stroke-width="4.2" stroke-linecap="butt"/><path d="M76.9 5.2 L84.1 12.8 M84.1 5.2 L76.9 12.8" stroke="#f6f6f6" stroke-width="2.6" stroke-linecap="butt"/></svg>
<div class="abs" style="left:7px;top:29px;width:919.5px;height:58.5px;background:#fff;box-sizing:border-box;border:1px solid #1c3560;border-top:2px solid #26395c;border-left:2px solid #26395c;box-shadow:0 0 0 1px rgba(255,255,255,.3)"></div>
<div class="tx">
<div class="t" style="left:10.29px;top:32px;transform:scaleX(0.8828)">Control for Night and Day plant experiment. Half sized plant tray with soil only enclosed in plastic bag and sealed. The drop in oxygen during the day seems to be an artifact of having the</div>
<div class="t" style="left:10.30px;top:45px;transform:scaleX(0.876)">oxygen sensor in driect light by a window.</div>
<div class="t" style="left:10.30px;top:58px;transform:scaleX(0.8701)">Humidity decreases as temperature rises as the sensor measures relative humidity. As warmer air holds more water vapour, relative humidity decreases as temperature rises, though the</div>
<div class="t" style="left:10.30px;top:71px;transform:scaleX(0.8689)">actual amount of water vapour in the air remains the same or similar.</div>
</div>
<div class="abs" style="left:328px;top:71px;width:1px;height:13px;background:#000"></div>
</div>
</body></html>
